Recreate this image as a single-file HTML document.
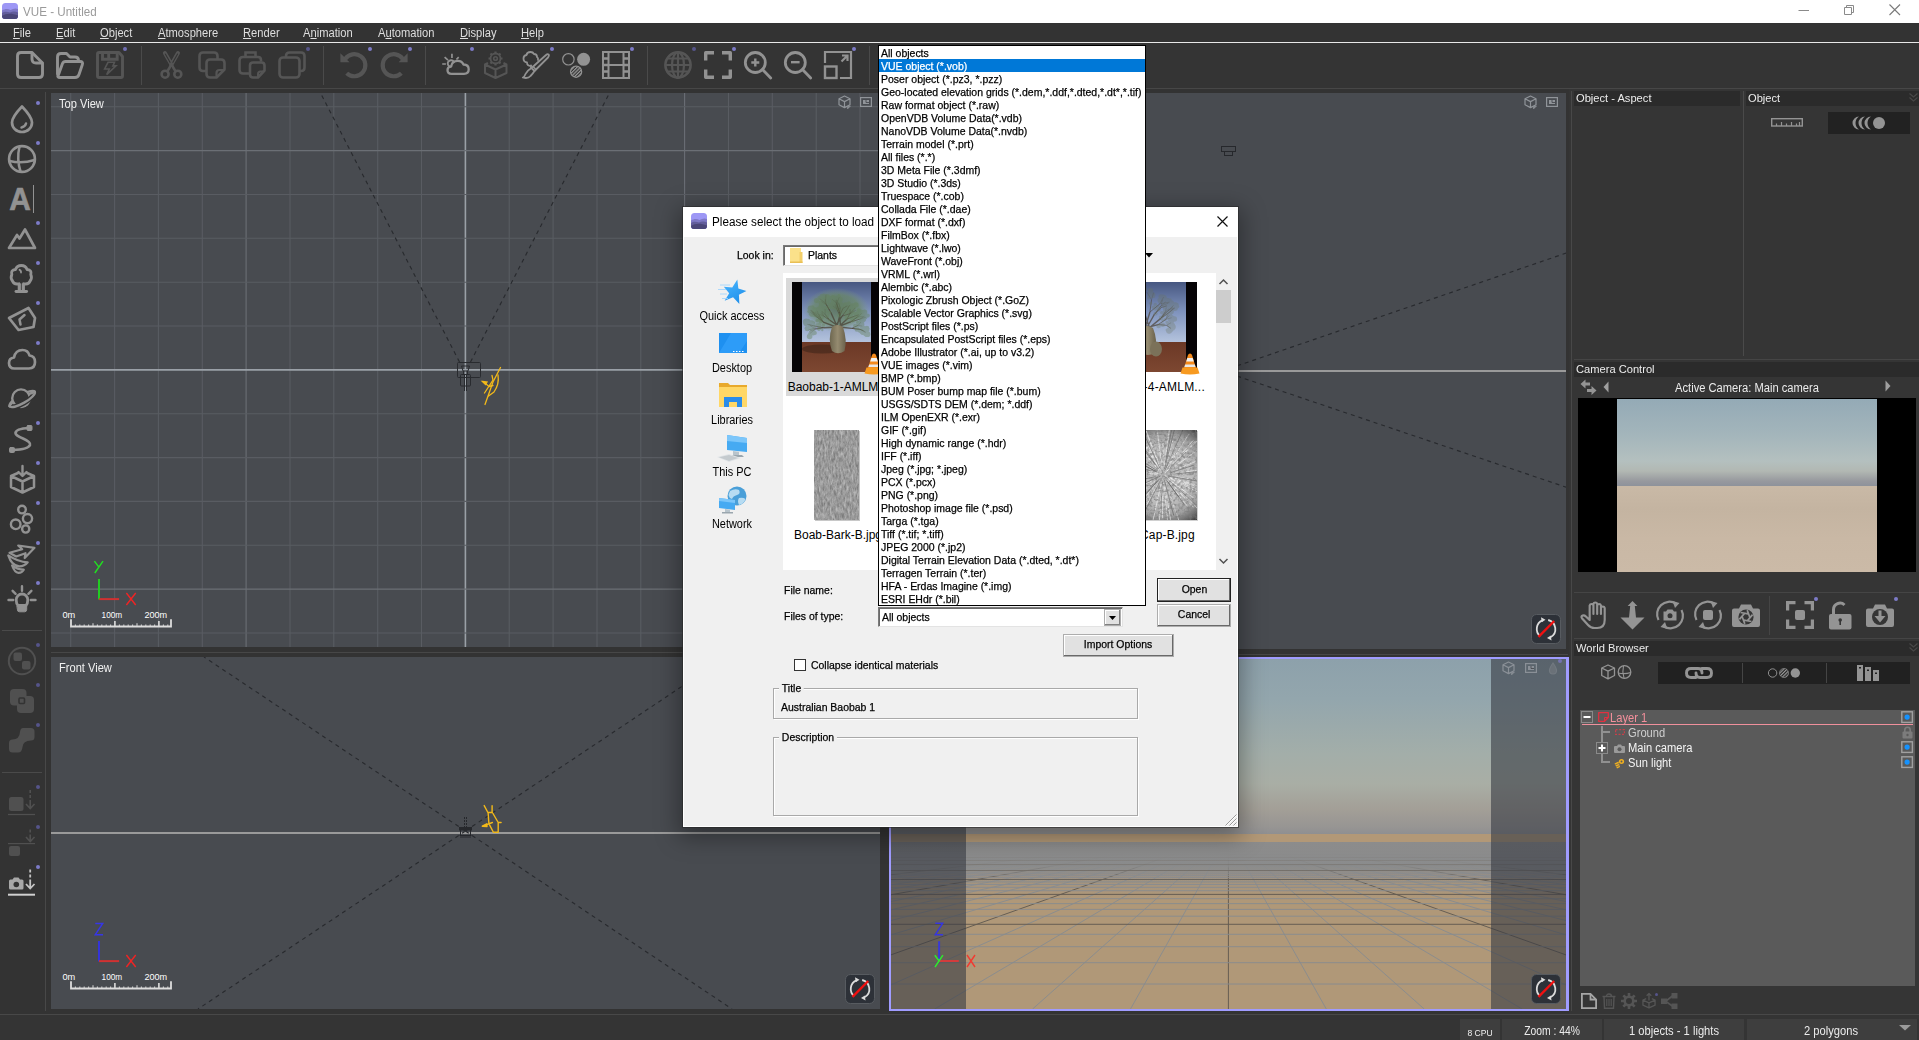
<!DOCTYPE html>
<html lang="en">
<head>
<meta charset="utf-8">
<title>VUE - Untitled</title>
<style>
*{box-sizing:border-box;margin:0;padding:0}
html,body{width:1919px;height:1040px;overflow:hidden;background:#333;font-family:"Liberation Sans",sans-serif;font-size:12px;color:#e4e4e4}
.abs{position:absolute}
#app{position:absolute;left:0;top:0;width:1919px;height:1040px;overflow:hidden;background:#333}
#titlebar{position:absolute;left:0;top:0;width:1919px;height:23px;background:#fff;color:#999}
#titlebar .t{position:absolute;left:23px;top:5px;font-size:12.5px;color:#9a9a9a;white-space:nowrap;transform-origin:0 50%;transform:scaleX(.93)}
#menubar{position:absolute;left:0;top:23px;width:1919px;height:19px;background:#333}
#menubar span{position:absolute;top:3px;font-size:12px;color:#dedede;white-space:nowrap;transform-origin:0 50%;transform:scaleX(.93)}
#menubar u{text-decoration:underline;text-underline-offset:1px}
#menuline{position:absolute;left:0;top:42px;width:1919px;height:1px;background:#e8e8e8}
#toolbar{position:absolute;left:0;top:43px;width:1919px;height:46px;background:#343434}
.tsep{position:absolute;top:3px;width:1px;height:39px;background:#4a4a4a}
.dot{position:absolute;width:4px;height:4px;border-radius:50%;background:#7d7bc8}
.dot.dim{background:#55548a}
svg{position:absolute;overflow:visible}
.vp{position:absolute;background:#484b50;overflow:hidden}
.vplabel{position:absolute;left:8px;top:4px;font-size:12px;color:#f0f0f0;white-space:nowrap;transform-origin:0 50%;transform:scaleX(.925)}
.ph{position:absolute;background:#2b2b2b;color:#ececec;font-size:11.6px;padding:.5px 0 0 2px;white-space:nowrap;height:15px;line-height:12px}
.ph span{display:inline-block;transform-origin:0 50%;transform:scaleX(.96)}
</style>
</head>
<body>
<div id="app">
<div id="titlebar">
  <svg style="left:2px;top:3px" width="16" height="16" viewBox="0 0 16 16">
    <defs><clipPath id="ic1"><rect x="0" y="0" width="16" height="16" rx="3.5"/></clipPath></defs>
    <g clip-path="url(#ic1)">
      <rect width="16" height="16" fill="#9d97f5"/>
      <path d="M0 7.5 C3 5.5 6 5.5 8.5 7 C11 5.5 13.5 5 16 6 V16 H0Z" fill="#7e78c6"/>
      <path d="M0 10 C2.5 8 5.5 8.5 8 9.5 C10.5 8 13.5 8 16 9.5 V16 H0Z" fill="#625d9c"/>
      <path d="M0 13 C4 10 10 10 16 12.5 V16 H0Z" fill="#4a4678"/>
    </g>
  </svg>
  <div class="t">VUE - Untitled</div>
  <svg style="left:1798px;top:5px" width="12" height="12" viewBox="0 0 12 12"><path d="M0.5 5.5H11" stroke="#8a8a8a" stroke-width="1" fill="none"/></svg>
  <svg style="left:1843px;top:4px" width="12" height="12" viewBox="0 0 12 12"><path d="M1.5 3.5H8.5V10.5H1.5Z M3.5 3.5V1.5H10.5V8.5H8.5" stroke="#8a8a8a" stroke-width="1" fill="none"/></svg>
  <svg style="left:1889px;top:4px" width="12" height="12" viewBox="0 0 12 12"><path d="M0.5 0.5L11 11M11 0.5L0.5 11" stroke="#7a7a7a" stroke-width="1.1" fill="none"/></svg>
</div>
<div id="menubar">
  <span style="left:13px"><u>F</u>ile</span>
  <span style="left:56px"><u>E</u>dit</span>
  <span style="left:100px"><u>O</u>bject</span>
  <span style="left:158px"><u>A</u>tmosphere</span>
  <span style="left:243px"><u>R</u>ender</span>
  <span style="left:303px">A<u>n</u>imation</span>
  <span style="left:378px">A<u>u</u>tomation</span>
  <span style="left:460px"><u>D</u>isplay</span>
  <span style="left:521px"><u>H</u>elp</span>
</div>
<div id="menuline"></div>
<div id="toolbar">
  <div class="abs" style="left:0;top:45px;width:1919px;height:1px;background:#474747"></div>
  <div class="tsep" style="left:141px"></div>
  <div class="tsep" style="left:323px"></div>
  <div class="tsep" style="left:425px"></div>
  <div class="tsep" style="left:647px"></div>
  <div class="tsep" style="left:869px"></div>
  <div class="dot" style="left:123px;top:4px;background:#706eb4"></div>
  <div class="dot dim" style="left:306px;top:4px"></div>
  <div class="dot" style="left:368px;top:4px"></div>
  <div class="dot" style="left:408px;top:4px"></div>
  <div class="dot" style="left:470px;top:4px"></div>
  <div class="dot" style="left:550px;top:4px"></div>
  <div class="dot" style="left:630px;top:4px"></div>
  <div class="dot dim" style="left:692px;top:4px"></div>
  <div class="dot" style="left:732px;top:4px"></div>
  <div class="dot" style="left:852px;top:4px"></div>
  <!-- new -->
  <svg style="left:16px;top:8px" width="28" height="28" viewBox="0 0 28 28" fill="none" stroke="#929292" stroke-width="2.9" stroke-linejoin="round" stroke-linecap="round">
    <path d="M5 1.5H16L26.5 12V23Q26.5 26.5 23 26.5H5Q1.5 26.5 1.5 23V5Q1.5 1.5 5 1.5Z"/><path d="M16 2V8Q16 12 20 12H26"/></svg>
  <!-- open -->
  <svg style="left:56px;top:8px" width="28" height="28" viewBox="0 0 28 28" fill="none" stroke="#929292" stroke-width="2.9" stroke-linejoin="round" stroke-linecap="round">
    <path d="M1.5 23V6Q1.5 2.5 5 2.5H10.5L14 6H19Q22.5 6 22.5 9.5V10.5"/><path d="M2 25L6.5 12.5Q7.3 10.5 9.5 10.5H24Q27.5 10.5 26.3 13.8L23 23.5Q22 26.5 19 26.5H4Q1 26.5 2 24Z"/></svg>
  <!-- save (disabled) -->
  <svg style="left:96px;top:8px" width="28" height="28" viewBox="0 0 28 28" fill="none" stroke="#555" stroke-width="2.900" stroke-linejoin="round">
    <path d="M3 1.500H23L26.500 5.500V25Q26.500 26.500 25 26.500H3Q1.500 26.500 1.500 25V3Q1.500 1.500 3 1.500Z"/><path d="M6.500 2V8.200H21.200V2M12.700 2V8" stroke-linejoin="miter"/><path d="M12 11.300H18.500L16.900 14.900H20L10.700 23.700L13.300 18H8.600Z" stroke-width="1.600" stroke-linejoin="miter"/></svg>
  <!-- cut -->
  <svg style="left:158px;top:8px" width="28" height="28" viewBox="0 0 28 28" fill="none" stroke="#555" stroke-linecap="round" stroke-linejoin="round">
    <path d="M6.900 2L13.300 13.300M20 2L13.600 13.300" stroke-width="4"/><path d="M7.300 3L12.300 11.800M19.600 3L14.600 11.800" stroke="#343434" stroke-width="1.100"/>
    <path d="M13.300 12.500Q15.500 17.500 17.600 20.300M13.600 12.500Q11.400 17.500 9.300 20.300" stroke-width="2.600"/>
    <circle cx="7.100" cy="23.200" r="3.500" stroke-width="2.600"/><circle cx="19.800" cy="23.200" r="3.500" stroke-width="2.600"/></svg>
  <!-- copy -->
  <svg style="left:198px;top:8px" width="28" height="28" viewBox="0 0 28 28" fill="none" stroke="#555" stroke-width="2.6" stroke-linejoin="round">
    <path d="M8.5 20H5Q1.5 20 1.5 16.500V5Q1.5 1.5 5 1.5H16Q19.5 1.5 19.5 5V8"/><path d="M12 8.500H23Q26.500 8.500 26.500 12V18.500L18.500 26.500H12Q8.500 26.500 8.500 23V12Q8.500 8.500 12 8.500Z"/><path d="M18.500 26V22Q18.500 19 21.500 19H26" stroke-width="2.2"/></svg>
  <!-- paste -->
  <svg style="left:238px;top:8px" width="28" height="28" viewBox="0 0 28 28" fill="none" stroke="#555" stroke-width="2.6" stroke-linejoin="round">
    <path d="M11.500 22.500H5Q1.5 22.500 1.5 19V9.500Q1.5 6 5 6H20Q23 6 23 9V10.500"/><path d="M7.500 6V1.5H17.500V6" stroke-linejoin="miter"/><path d="M15 11.500H23.500Q26.500 11.500 26.500 14.500V19.500L20 26.500H15Q12 26.500 12 23.500V14.500Q12 11.500 15 11.500Z"/><path d="M20 26V23Q20 20.500 22.500 20.500H26" stroke-width="2"/></svg>
  <!-- duplicate -->
  <svg style="left:278px;top:8px" width="28" height="28" viewBox="0 0 28 28" fill="none" stroke="#555" stroke-width="2.6" stroke-linejoin="round">
    <path d="M8 6.500V5Q8 1.500 11.500 1.500H23Q26.500 1.500 26.500 5V16.500Q26.500 20 23 20H22"/><rect x="1.500" y="6.500" width="20" height="20" rx="3.500"/></svg>
  <!-- undo -->
  <svg style="left:340px;top:8px" width="28" height="28" viewBox="0 0 28 28" fill="none" stroke="#555" stroke-width="4.200">
    <path d="M5.100 8.100A11.050 11.050 0 1 1 6.700 22.200"/><path d="M0.400 2.200V11.300H9.500Z" fill="#555" stroke="none"/></svg>
  <!-- redo -->
  <svg style="left:381px;top:8px" width="28" height="28" viewBox="0 0 28 28" fill="none" stroke="#555" stroke-width="4.200">
    <path d="M21.950 8.100A11.050 11.050 0 1 0 20.350 22.200"/><path d="M26.650 2.200V11.300H17.550Z" fill="#555" stroke="none"/></svg>
  <!-- atmosphere -->
  <svg style="left:442px;top:8px" width="28" height="28" viewBox="0 0 28 28" fill="none" stroke="#929292" stroke-width="2.300" stroke-linecap="round" stroke-linejoin="round">
    <path d="M9.500 22.800Q5.500 22.800 5.500 19Q5.500 15.800 9.200 15.300Q10 9.800 15.800 9.800Q20 9.800 21.500 13.500Q26.700 13.700 26.700 18.300Q26.700 22.800 22 22.800Z"/><path d="M8.500 15.800A3.400 3.400 0 0 1 6 11.200A3.400 3.400 0 0 1 12 10.800" stroke-width="1.900"/><path d="M9.950 2.800V7M2.600 6.100L6 9.100M16.700 6.100L14.400 8.500M0.200 13H3.900" stroke-width="1.700" stroke-linecap="butt"/></svg>
  <!-- gear cube (disabled) -->
  <svg style="left:484px;top:8px" width="24" height="28" viewBox="0 0 24 28" fill="none" stroke="#555" stroke-width="2" stroke-linejoin="round">
    <path d="M4 12L1 13.500V22L11.500 27L22.500 22V13.500L19.500 12M1 13.500L11.500 18.500L22.500 13.500M11.500 18.500V27"/><circle cx="11.500" cy="7.500" r="1.800" stroke-width="1.600"/><circle cx="11.500" cy="7.500" r="5" stroke-width="1.800"/><g stroke-width="2.200"><path d="M11.500 0.500V2.500M11.500 12.500V14.500M4.500 7.500H6.500M16.500 7.500H18.500M6.500 2.500L8 4M15 11L16.500 12.500M6.500 12.500L8 11M15 4L16.500 2.500"/></g></svg>
  <!-- brush -->
  <svg style="left:522px;top:8px" width="28" height="28" viewBox="0 0 28 28" fill="none" stroke="#929292" stroke-width="1.800" stroke-linejoin="round" stroke-linecap="round">
    <path d="M9 15Q5 15 5 11.500Q1.500 11 1.500 7.500Q1.500 4.500 4.500 4Q5 1 8.500 1Q11 1 12 3Q15 3 15 6Q16.500 7 16 9"/><path d="M9 14.500V17"/><path d="M26.500 3.500Q27.500 4.500 26 6.500L12.500 20L9.500 17L24 4Q25.500 2.500 26.500 3.500Z"/><path d="M9.500 17Q5 19.500 3.500 23Q2.500 26 0.800 26.500Q6 28 8.500 25Q11 22.500 12.500 20"/><path d="M11 15.500L14 18.500" stroke-width="1.500"/></svg>
  <!-- spheres -->
  <svg style="left:562px;top:8px" width="28" height="28" viewBox="0 0 28 28">
    <defs><pattern id="hat" width="2.400" height="2.400" patternUnits="userSpaceOnUse" patternTransform="rotate(-45)"><rect width="2.400" height="1.200" fill="#9a9a9a"/></pattern></defs>
    <circle cx="6.400" cy="8.300" r="5.700" fill="none" stroke="#929292" stroke-width="1.200"/><circle cx="21.600" cy="8.300" r="6.500" fill="#929292"/><circle cx="14.100" cy="20.700" r="5.600" fill="url(#hat)" stroke="#929292" stroke-width="1.200"/></svg>
  <!-- film -->
  <svg style="left:602px;top:8px" width="28" height="28" viewBox="0 0 28 28" fill="none" stroke="#929292" stroke-width="2">
    <rect x="1" y="1" width="26" height="26"/><path d="M6.500 1V27M21.500 1V27M6.500 14H21.500"/><path d="M1 7.500H6.500M1 14H6.500M1 20.500H6.500M21.500 7.500H27M21.500 14H27M21.500 20.500H27" stroke-width="2.600"/></svg>
  <!-- globe (disabled) -->
  <svg style="left:664px;top:8px" width="28" height="28" viewBox="0 0 28 28" fill="none" stroke="#555" stroke-width="2.200">
    <circle cx="14" cy="14" r="12.600" stroke-width="2.600"/><ellipse cx="14" cy="14" rx="6" ry="12.600"/><path d="M14 1.500V26.500M1.500 14H26.500M3.500 7.500H24.500M3.500 20.500H24.500"/></svg>
  <!-- frame -->
  <svg style="left:704px;top:8px" width="28" height="28" viewBox="0 0 28 28" fill="none" stroke="#929292" stroke-width="3.400" stroke-linejoin="round">
    <path d="M1.700 9.500V1.700H10M18 1.700H26.300V9.500M26.300 18.500V26.300H18M10 26.300H1.700V18.500"/></svg>
  <!-- zoom in -->
  <svg style="left:744px;top:8px" width="30" height="30" viewBox="0 0 30 30" fill="none" stroke="#929292" stroke-width="2.800" stroke-linecap="round">
    <circle cx="11.300" cy="11.500" r="10"/><path d="M18.500 18.500L26.700 27"/><path d="M7.300 11.500H15.300M11.300 7.500V15.500" stroke-width="2.400" stroke-linecap="butt"/></svg>
  <!-- zoom out -->
  <svg style="left:784px;top:8px" width="30" height="30" viewBox="0 0 30 30" fill="none" stroke="#929292" stroke-width="2.800" stroke-linecap="round">
    <circle cx="11.300" cy="11.500" r="10"/><path d="M18.500 18.500L26.700 27"/><path d="M7 11.200H15.600" stroke-width="2.400" stroke-linecap="butt"/></svg>
  <!-- resize -->
  <svg style="left:824px;top:8px" width="28" height="28" viewBox="0 0 28 28" fill="none" stroke="#929292" stroke-width="2.200">
    <path d="M1 12V1H27V27H16"/><rect x="1" y="15.500" width="11.500" height="11.500" stroke-width="2.400"/><path d="M17.500 10.500L23 5M18 4.500H23.500V10" stroke-width="2.200"/></svg>
</div>
<div id="lefttb" class="abs" style="left:0;top:89px;width:51px;height:926px;background:#333">
  <div class="abs" style="left:45px;top:3px;width:1px;height:919px;background:#484848"></div>
  <div class="abs" style="left:2px;top:541px;width:40px;height:1px;background:#4a4a4a"></div>
  <div class="abs" style="left:2px;top:683px;width:40px;height:1px;background:#4a4a4a"></div>
  <div class="dot" style="left:36px;top:12px"></div>
  <div class="dot" style="left:36px;top:52px"></div>
  <div class="dot" style="left:36px;top:132px"></div>
  <div class="dot" style="left:36px;top:172px"></div>
  <div class="dot" style="left:36px;top:212px"></div>
  <div class="dot" style="left:36px;top:252px"></div>
  <div class="dot" style="left:36px;top:332px"></div>
  <div class="dot" style="left:36px;top:372px"></div>
  <div class="dot" style="left:36px;top:412px"></div>
  <div class="dot" style="left:36px;top:452px"></div>
  <div class="dot" style="left:36px;top:492px"></div>
  <div class="dot dim" style="left:36px;top:554px"></div>
  <div class="dot dim" style="left:36px;top:594px"></div>
  <div class="dot dim" style="left:36px;top:634px"></div>
  <div class="dot dim" style="left:36px;top:696px"></div>
  <div class="dot dim" style="left:36px;top:736px"></div>
  <div class="dot" style="left:36px;top:776px"></div>
  
  <!-- drop  (page y 105-133 => local 16-44) -->
  <svg style="left:8px;top:16px" width="28" height="28" viewBox="0 0 28 28" fill="none" stroke="#929292" stroke-width="2.700" stroke-linecap="round" stroke-linejoin="round">
    <path d="M14 1.500Q24 12 24 17.500A10 9.500 0 0 1 4 17.500Q4 12 14 1.500Z"/><path d="M18 18.500Q17 22 13.500 22.500" stroke-width="2.500"/></svg>
  <!-- sphere -->
  <svg style="left:8px;top:56px" width="28" height="28" viewBox="0 0 28 28" fill="none" stroke="#929292" stroke-width="2.500">
    <circle cx="14" cy="14" r="12.900" stroke-width="2.700"/><path d="M11.500 1.500Q8.500 14 12.500 26.500M1.500 16Q14 19 26.500 15"/></svg>
  <!-- A| -->
  <svg style="left:8px;top:94px" width="28" height="32" viewBox="0 0 28 32">
    <text x="1.300" y="27" font-family="Liberation Sans,sans-serif" font-weight="bold" font-size="31" fill="#929292" stroke="#929292" stroke-width=".7" textLength="21.500" lengthAdjust="spacingAndGlyphs">A</text>
    <path d="M25.500 2V30" stroke="#929292" stroke-width="1"/></svg>
  <!-- mountain -->
  <svg style="left:7px;top:138px" width="30" height="24" viewBox="0 0 30 24" fill="none" stroke="#929292" stroke-width="2.700" stroke-linejoin="round">
    <path d="M2 21L10 8L12.500 11.500L18 2.500L28 21Z"/></svg>
  <!-- tree -->
  <svg style="left:9px;top:175px" width="26" height="30" viewBox="0 0 26 30" fill="none" stroke="#929292" stroke-width="2.900" stroke-linejoin="round" stroke-linecap="round">
    <path d="M10 19.800Q5 21 3.500 17Q1.200 14 2.800 10.500Q1.500 6 6.500 5.500Q8 1.500 12.300 1.500Q16.600 1.500 18.100 5.500Q23.100 6 21.800 10.500Q23.400 14 21.100 17Q19.600 21 14.600 19.800"/><path d="M10.300 19.500V26M14.300 19.500V26" stroke-width="3.200" stroke-linecap="butt"/><path d="M7 27.500H17.600"/><path d="M10.500 5.800Q12.300 6.500 12 8.500" stroke-width="1.800"/></svg>
  <!-- rock -->
  <svg style="left:7px;top:217px" width="30" height="26" viewBox="0 0 30 26" fill="none" stroke="#929292" stroke-width="2.700" stroke-linejoin="round" stroke-linecap="round">
    <path d="M2 12L21.500 2L28 12L26.500 21L11.500 24Z"/><path d="M17.500 9L12.500 13.500L13.500 18.500" stroke-width="2.500"/></svg>
  <!-- cloud -->
  <svg style="left:7px;top:259px" width="30" height="22" viewBox="0 0 30 22" fill="none" stroke="#929292" stroke-width="2.700" stroke-linejoin="round">
    <path d="M7.500 20.500Q2 20.500 2 15Q2 10 7 9.500Q8.500 2 15.500 2Q21 2 22.500 7.500Q28 8 28 14Q28 20.500 22 20.500Z"/></svg>
  <!-- planet -->
  <svg style="left:7px;top:298px" width="30" height="24" viewBox="0 0 30 24" fill="none" stroke="#929292" stroke-width="2.400" stroke-linecap="round">
    <defs><clipPath id="plc"><circle cx="14" cy="11.200" r="9.500"/></clipPath></defs>
    <ellipse cx="15.200" cy="12" rx="14.500" ry="4.200" transform="rotate(-30 15.200 12)"/>
    <circle cx="14" cy="11.200" r="9" fill="#333" stroke="none"/>
    <circle cx="14" cy="11.200" r="8.800"/>
    <g clip-path="url(#plc)"><path d="M2.600 19.250A14.500 4.200 -30 0 0 27.750 4.750L29 30H2Z" fill="#929292" stroke="none"/></g>
    <path d="M2.600 19.250A14.500 4.200 -30 0 0 27.750 4.750" stroke="#333" stroke-width="5.200" stroke-linecap="butt"/>
    <path d="M2.600 19.250A14.500 4.200 -30 0 0 27.750 4.750"/>
    <path d="M2.600 19.250A14.500 4.200 -30 0 1 6 14.800M27.750 4.750A14.500 4.200 -30 0 0 22.300 7"/>
  </svg>
  <!-- spline -->
  <svg style="left:8px;top:335px" width="28" height="30" viewBox="0 0 28 30" fill="none" stroke="#929292" stroke-width="2.700" stroke-linecap="round">
    <path d="M21 4Q8 4.500 7.500 9Q7.500 11.500 15 14.500Q23 18 22 21Q20 25.500 5 26"/><rect x="19" y="1.500" width="5" height="5" rx="1" fill="#929292" stroke-width="1"/><rect x="1.500" y="23.500" width="5" height="5" rx="1" fill="#929292" stroke-width="1"/></svg>
  <!-- box import -->
  <svg style="left:9px;top:376px" width="28" height="30" viewBox="0 0 28 30" fill="none" stroke="#929292" stroke-width="2.500" stroke-linejoin="round" stroke-linecap="round">
    <path d="M9 8L2 11V22L13.500 27.500L25 22V11L18 8M2 11L13.500 16.500L25 11M13.500 16.500V27.500"/><path d="M13.500 1V10.500M9.500 7L13.500 11L17.500 7" stroke-width="2.400"/></svg>
  <!-- circles -->
  <svg style="left:8px;top:414px" width="28" height="30" viewBox="0 0 28 30" fill="none" stroke="#929292" stroke-width="2.400">
    <circle cx="14" cy="6.600" r="3.800"/><circle cx="19.500" cy="15.600" r="4.600"/><circle cx="7.700" cy="21.300" r="4.800"/><circle cx="17.700" cy="26" r="3.600"/></svg>
  <!-- swoosh arrow -->
  <svg style="left:7px;top:455px" width="30" height="31" viewBox="0 0 30 31" fill="none" stroke="#929292" stroke-width="2.200" stroke-linejoin="round" stroke-linecap="round">
    <path d="M11.200 1.500L27.500 3.800L17.700 14L18.500 9.200L9.200 12.500L2.500 8.700L15.200 5.300Z"/><path d="M1.300 11.300Q4.500 21.500 12.300 22.400Q17.500 22.300 20.700 18.300Q11 17.800 1.300 11.300Z"/><path d="M5.100 21.500Q7.500 28.500 11.500 28.900Q15 28.800 16.800 25.700Q10.500 25.500 5.100 21.500Z"/></svg>
  <!-- bulb -->
  <svg style="left:7px;top:495px" width="30" height="30" viewBox="0 0 30 30" fill="none" stroke="#929292" stroke-width="2.400" stroke-linecap="round">
    <path d="M11 21.500Q9.200 19.500 9.200 15.800A5.800 5.800 0 0 1 20.800 15.800Q20.800 19.500 19 21.500Z" stroke-width="2.800" stroke-linejoin="round"/><path d="M10.300 22H19.700V25.500Q19.700 27.800 17.500 27.800H12.500Q10.300 27.800 10.300 25.500Z" fill="#929292" stroke-width="1"/><path d="M15 2.200V6.800M5.600 6.800L8.600 9.800M24.400 6.800L21.400 9.800M1.500 16H6.200M23.800 16H28.500"/></svg>
  <!-- disabled 1: circle with two squares -->
  <svg style="left:7px;top:557px" width="30" height="30" viewBox="0 0 30 30">
    <circle cx="15" cy="15" r="13.200" fill="none" stroke="#505050" stroke-width="2"/><rect x="6.500" y="6.500" width="8.500" height="8.500" rx="2" fill="#505050"/><rect x="15" y="15" width="8.500" height="8.500" rx="2" fill="#505050"/></svg>
  <!-- disabled 2 -->
  <svg style="left:9px;top:599px" width="26" height="26" viewBox="0 0 26 26">
    <rect x="1" y="1" width="16.500" height="16.500" rx="4" fill="#505050"/><rect x="8" y="8" width="17" height="17" rx="4" fill="#505050"/><rect x="10" y="10" width="5.500" height="5.500" rx="1" fill="none" stroke="#333" stroke-width="1.600"/></svg>
  <!-- disabled 3 -->
  <svg style="left:8px;top:638px" width="28" height="28" viewBox="0 0 28 28">
    <path d="M15 1H23Q26.500 1 26.500 4.500V10Q26.500 13.500 23 13.500Q15 13.500 14.500 20Q14 25.500 10 25.500H4.500Q1 25.500 1 22V16Q1 12.500 4.500 12.500Q11.500 12.500 12 5Q12.500 1 15 1Z" fill="#505050"/></svg>
  <!-- drop 1 -->
  <svg style="left:7px;top:699px" width="30" height="30" viewBox="0 0 30 30" fill="none" stroke="#505050" stroke-width="1.400">
    <rect x="2" y="9" width="14.500" height="14" rx="2.500" fill="#505050" stroke="none"/><path d="M23.200 2V5M23.200 7V10M23.200 12V20M19 16L23.200 20.500L27.500 16" stroke-width="1.600"/><path d="M1 26.500H28" stroke-width="1.200"/></svg>
  <!-- drop 2 -->
  <svg style="left:7px;top:739px" width="30" height="30" viewBox="0 0 30 30" fill="none" stroke="#505050" stroke-width="1.400">
    <rect x="2" y="18" width="11" height="10" rx="2" fill="#505050" stroke="none"/><path d="M23.200 1.500V4.500M23.200 6.500V13M19 9L23.200 13.500L27.500 9" stroke-width="1.600"/><path d="M1 15.600H28" stroke-width="1.200"/></svg>
  <!-- drop 3 camera -->
  <svg style="left:7px;top:779px" width="30" height="30" viewBox="0 0 30 30" fill="none" stroke="#c4c4c4" stroke-width="1.400">
    <path d="M2 13Q2 11.500 3.500 11.500H5.500L7 9.500H11.500L13 11.500H15Q16.500 11.500 16.500 13V20Q16.500 21.500 15 21.500H3.500Q2 21.500 2 20Z" fill="#a8a8a8" stroke="none"/><circle cx="9.300" cy="16.500" r="2.800" fill="#333" stroke="none"/><path d="M23.200 1.500V4.500M23.200 6.500V9.500M23.200 11.500V20M19 16L23.200 20.500L27.500 16" stroke-width="1.800"/><path d="M1 26.700H28" stroke-width="2" stroke="#d0d0d0"/></svg>
</div>
<div class="vp" id="vptop" style="left:51px;top:93px;width:829px;height:554px">
<svg style="left:0;top:0" width="829" height="554" viewBox="51 93 829 554" shape-rendering="auto">
<path d="M70.7 93V647" stroke="#595c62" stroke-width="1.1"/>
<path d="M114.6 93V647" stroke="#595c62" stroke-width="1.1"/>
<path d="M158.4 93V647" stroke="#595c62" stroke-width="1.1"/>
<path d="M202.3 93V647" stroke="#595c62" stroke-width="1.1"/>
<path d="M246.1 93V647" stroke="#6b6f75" stroke-width="1.1"/>
<path d="M290.0 93V647" stroke="#595c62" stroke-width="1.1"/>
<path d="M333.8 93V647" stroke="#595c62" stroke-width="1.1"/>
<path d="M377.7 93V647" stroke="#595c62" stroke-width="1.1"/>
<path d="M421.5 93V647" stroke="#595c62" stroke-width="1.1"/>
<path d="M465.4 93V647" stroke="#9aa0a7" stroke-width="1.6"/>
<path d="M509.2 93V647" stroke="#595c62" stroke-width="1.1"/>
<path d="M553.1 93V647" stroke="#595c62" stroke-width="1.1"/>
<path d="M597.0 93V647" stroke="#595c62" stroke-width="1.1"/>
<path d="M640.8 93V647" stroke="#595c62" stroke-width="1.1"/>
<path d="M684.6 93V647" stroke="#6b6f75" stroke-width="1.1"/>
<path d="M728.5 93V647" stroke="#595c62" stroke-width="1.1"/>
<path d="M772.3 93V647" stroke="#595c62" stroke-width="1.1"/>
<path d="M816.2 93V647" stroke="#595c62" stroke-width="1.1"/>
<path d="M860.0 93V647" stroke="#595c62" stroke-width="1.1"/>
<path d="M51 106.8H880" stroke="#595c62" stroke-width="1.1"/>
<path d="M51 150.6H880" stroke="#6b6f75" stroke-width="1.1"/>
<path d="M51 194.5H880" stroke="#595c62" stroke-width="1.1"/>
<path d="M51 238.3H880" stroke="#595c62" stroke-width="1.1"/>
<path d="M51 282.2H880" stroke="#595c62" stroke-width="1.1"/>
<path d="M51 326.0H880" stroke="#595c62" stroke-width="1.1"/>
<path d="M51 369.9H880" stroke="#9aa0a7" stroke-width="1.6"/>
<path d="M51 413.8H880" stroke="#595c62" stroke-width="1.1"/>
<path d="M51 457.6H880" stroke="#595c62" stroke-width="1.1"/>
<path d="M51 501.4H880" stroke="#595c62" stroke-width="1.1"/>
<path d="M51 545.3H880" stroke="#595c62" stroke-width="1.1"/>
<path d="M51 589.1H880" stroke="#6b6f75" stroke-width="1.1"/>
<path d="M51 633.0H880" stroke="#595c62" stroke-width="1.1"/>
<path d="M459.500 362L320.500 93M470.500 362L609.500 93" stroke="#282a2e" stroke-width="1.150" stroke-dasharray="4 4" fill="none"/>
<g fill="none" stroke="#292b2f" stroke-width="1"><rect x="457.500" y="362.500" width="23" height="15" rx="1"/><rect x="460.500" y="374.500" width="10" height="11.500" rx="1"/><path d="M461.500 366H469.500L468 371H463ZM463.500 371V375M467.500 371V375M464.500 375V391M466.500 375V391"/></g>
<g fill="none" stroke="#f2b91a" stroke-width="1.300" stroke-linecap="round"><path d="M500.500 367.500L493 382L485 404.500"/><path d="M498 375Q499.500 384 494 392L488.500 396"/><path d="M492 375.500L493 380L484.500 393M489 386.500L493 385.500M489 386.500L485.500 383.500"/><path d="M482.500 381.500L487 382L485.500 384.500Z" fill="#f2b91a"/></g>
</svg>
<div class="vplabel">Top View</div>
<svg style="left:787px;top:2px" width="14" height="15" viewBox="0 0 14 15" fill="none" stroke="#909499" stroke-width="1.200" stroke-linejoin="round"><path d="M6.500 1L12 3.800V9.800L6.500 12.600L1 9.800V3.800ZM1 3.800L6.500 6.600L12 3.800M6.500 6.600V12.600"/><path d="M9.500 11.500V14L12.500 11Z" fill="#909499" stroke-width="0.600"/></svg>
<svg style="left:809px;top:4px" width="12" height="10" viewBox="0 0 12 10" fill="none" stroke="#909499" stroke-width="1.200"><rect x="0.600" y="0.600" width="10.800" height="8.800"/><rect x="3" y="3" width="6" height="4" fill="#909499" stroke="none"/><path d="M6 3V5.500H9" stroke="#484b50" stroke-width="0.900"/></svg>
<svg style="left:0;top:0" width="200" height="587" viewBox="51 93 200 587" fill="none"><path d="M99 579V599.500" stroke="#22cc22" stroke-width="2"/><path d="M99 599.100H119.100" stroke="#d03232" stroke-width="2"/><path d="M94.400 561.100L98.700 566.900M103 561.100L94.800 573" stroke="#22dd22" stroke-width="1.500"/><path d="M126.400 593L135.700 605M135.700 593L126.400 605" stroke="#f02424" stroke-width="1.400"/></svg>
<svg style="left:0;top:0" width="200" height="587" viewBox="51 93 200 587" fill="none"><g font-family="Liberation Sans,sans-serif" font-size="9.2" fill="#fff"><text x="62.500" y="618" textLength="12.800" lengthAdjust="spacingAndGlyphs">0m</text><text x="101.600" y="618" textLength="20.600" lengthAdjust="spacingAndGlyphs">100m</text><text x="144.400" y="618" textLength="22.800" lengthAdjust="spacingAndGlyphs">200m</text></g><path d="M71 619.300V626.500H171V619.300" stroke="#dcdcdc" stroke-width="1.800"/><path d="M114.900 621V626M158.900 621V626" stroke="#dcdcdc" stroke-width="1.600"/><path d="M75.4 624.6V626M79.8 624.6V626M84.2 624.6V626M88.6 624.6V626M93.0 623.3V626M97.4 624.6V626M101.8 624.6V626M106.2 624.6V626M110.6 624.6V626M119.4 624.6V626M123.8 624.6V626M128.2 624.6V626M132.6 624.6V626M137.0 623.3V626M141.4 624.6V626M145.8 624.6V626M150.2 624.6V626M154.6 624.6V626M163.4 624.6V626M167.8 624.6V626" stroke="#d0d0d0" stroke-width="1.100"/></svg>
</div>
<div class="vp" id="vpside" style="left:889px;top:93px;width:677px;height:556px">
<svg style="left:0;top:0" width="677" height="556" viewBox="889 93 677 556">
<path d="M889 371H1566" stroke="#9a9a9a" stroke-width="2"/>
<path d="M1222 371L1567 252.800M1222 371L1567 487.500" stroke="#282a2e" stroke-width="1.150" stroke-dasharray="4 4" fill="none"/>
<g fill="none" stroke="#26282c" stroke-width="1"><rect x="1221.500" y="146.500" width="14" height="5"/><rect x="1224.500" y="151.500" width="8" height="4"/></g>
</svg>
<div class="vplabel">Side View</div>
<svg style="left:635px;top:2px" width="14" height="15" viewBox="0 0 14 15" fill="none" stroke="#909499" stroke-width="1.200" stroke-linejoin="round"><path d="M6.500 1L12 3.800V9.800L6.500 12.600L1 9.800V3.800ZM1 3.800L6.500 6.600L12 3.800M6.500 6.600V12.600"/><path d="M9.500 11.500V14L12.500 11Z" fill="#909499" stroke-width="0.600"/></svg>
<svg style="left:657px;top:4px" width="12" height="10" viewBox="0 0 12 10" fill="none" stroke="#909499" stroke-width="1.200"><rect x="0.600" y="0.600" width="10.800" height="8.800"/><rect x="3" y="3" width="6" height="4" fill="#909499" stroke="none"/><path d="M6 3V5.500H9" stroke="#484b50" stroke-width="0.900"/></svg>
<svg style="left:642px;top:521px" width="30" height="30" viewBox="0 0 30 30" fill="none"><rect x="0.500" y="0.500" width="29" height="29" rx="5" fill="#2d3138" stroke="#575b60" stroke-width="1"/><path d="M9.200 22.200A9.300 9.300 0 0 1 11.500 6.400" stroke="#dcdcdc" stroke-width="1.800"/><path d="M17.200 6A9.300 9.300 0 0 1 19.500 23.200" stroke="#dcdcdc" stroke-width="1.800"/><path d="M10 3.300L14.500 5.800L10.800 8.300Z" fill="#dcdcdc"/><path d="M20.500 26.500L16 24L19.800 21.600Z" fill="#dcdcdc"/><path d="M7.500 22.800L23.200 7" stroke="#f01010" stroke-width="2.400"/></svg>
</div>
<div class="vp" id="vpfront" style="left:51px;top:657px;width:829px;height:352px">
<svg style="left:0;top:0" width="829" height="352" viewBox="51 657 829 352">
<path d="M51 833H880" stroke="#9a9a9a" stroke-width="2"/>
<path d="M465.400 831L204 657M465.400 831L732 1009M465.400 831L198 1009M465.400 831L726 657" stroke="#282a2e" stroke-width="1.150" stroke-dasharray="4 4" fill="none"/>
<g fill="none" stroke="#26282c" stroke-width="1"><path d="M464.500 817V827M466.500 817V827" stroke-dasharray="2 1"/><rect x="459.500" y="827.500" width="12" height="2.500" fill="#26282c"/><path d="M460.500 830V836M470.500 830V836M459.500 835.500H471.500M460 837H471"/></g>
<g fill="none" stroke="#f2b91a" stroke-width="1.400" stroke-linecap="round" stroke-linejoin="round"><path d="M484.200 805.600L487.900 812.500H492.400L498.200 822.500V832.200H493.400L488.900 823.600L488.100 812.500M492.100 805.800V812.500M498.200 822.500H501.100M492.400 822.500L485.500 825.200"/><path d="M482.300 826.200L486.800 823.800L487 826.600Z" fill="#f2b91a"/></g>
</svg>
<div class="vplabel">Front View</div>
<svg style="left:0;top:0" width="200" height="587" viewBox="51 295 200 587" fill="none"><path d="M99 579V599.500" stroke="#3434d8" stroke-width="2"/><path d="M99 599.100H119.100" stroke="#d03232" stroke-width="2"/><path d="M95.300 561.500H102.700L95.300 572.700H103" stroke="#3636e6" stroke-width="1.500"/><path d="M126.400 593L135.700 605M135.700 593L126.400 605" stroke="#f02424" stroke-width="1.400"/></svg>
<svg style="left:0;top:0" width="200" height="587" viewBox="51 295 200 587" fill="none"><g font-family="Liberation Sans,sans-serif" font-size="9.2" fill="#fff"><text x="62.500" y="618" textLength="12.800" lengthAdjust="spacingAndGlyphs">0m</text><text x="101.600" y="618" textLength="20.600" lengthAdjust="spacingAndGlyphs">100m</text><text x="144.400" y="618" textLength="22.800" lengthAdjust="spacingAndGlyphs">200m</text></g><path d="M71 619.300V626.500H171V619.300" stroke="#dcdcdc" stroke-width="1.800"/><path d="M114.900 621V626M158.900 621V626" stroke="#dcdcdc" stroke-width="1.600"/><path d="M75.4 624.6V626M79.8 624.6V626M84.2 624.6V626M88.6 624.6V626M93.0 623.3V626M97.4 624.6V626M101.8 624.6V626M106.2 624.6V626M110.6 624.6V626M119.4 624.6V626M123.8 624.6V626M128.2 624.6V626M132.6 624.6V626M137.0 623.3V626M141.4 624.6V626M145.8 624.6V626M150.2 624.6V626M154.6 624.6V626M163.4 624.6V626M167.8 624.6V626" stroke="#d0d0d0" stroke-width="1.100"/></svg>
<svg style="left:794px;top:317px" width="30" height="30" viewBox="0 0 30 30" fill="none"><rect x="0.500" y="0.500" width="29" height="29" rx="5" fill="#2d3138" stroke="#575b60" stroke-width="1"/><path d="M9.200 22.200A9.300 9.300 0 0 1 11.500 6.400" stroke="#dcdcdc" stroke-width="1.800"/><path d="M17.200 6A9.300 9.300 0 0 1 19.500 23.200" stroke="#dcdcdc" stroke-width="1.800"/><path d="M10 3.300L14.500 5.800L10.800 8.300Z" fill="#dcdcdc"/><path d="M20.500 26.500L16 24L19.800 21.600Z" fill="#dcdcdc"/><path d="M7.500 22.800L23.200 7" stroke="#f01010" stroke-width="2.400"/></svg>
</div>
<div class="abs" id="vppersp" style="left:889px;top:657px;width:680px;height:354px;background:#a09cff;overflow:hidden">
<div class="abs" style="left:2px;top:2px;width:675px;height:350px;overflow:hidden;background:linear-gradient(to bottom,#8da1ab 0px,#93a6ad 40px,#a3aea9 95px,#a9aea5 125px,#a39f97 150px,#979593 168px,#8f8f91 175px,#b29877 175.500px,#b29877 183px,#8c8c8c 183.500px,#8c8c8c 190px,#b09878 240px,#b09878 350px)">
<svg style="left:0;top:0" width="675" height="350" viewBox="891 659 675 350">
<defs><linearGradient id="haze" x1="0" y1="0" x2="0" y2="1"><stop offset="0" stop-color="#8c8c8c" stop-opacity="1"/><stop offset="0.250" stop-color="#8c8c8c" stop-opacity="0.950"/><stop offset="1" stop-color="#8c8c8c" stop-opacity="0"/></linearGradient></defs>
<g fill="none"><path d="M1228.4 834.7L-4645.6 1009.0" stroke="#625b51" stroke-width="0.95"/>
<path d="M1228.4 834.7L-4547.7 1009.0" stroke="#878b90" stroke-width="0.9"/>
<path d="M1228.4 834.7L-4449.8 1009.0" stroke="#878b90" stroke-width="0.9"/>
<path d="M1228.4 834.7L-4351.9 1009.0" stroke="#878b90" stroke-width="0.9"/>
<path d="M1228.4 834.7L-4254.0 1009.0" stroke="#878b90" stroke-width="0.9"/>
<path d="M1228.4 834.7L-4156.1 1009.0" stroke="#625b51" stroke-width="0.95"/>
<path d="M1228.4 834.7L-4058.2 1009.0" stroke="#878b90" stroke-width="0.9"/>
<path d="M1228.4 834.7L-3960.3 1009.0" stroke="#878b90" stroke-width="0.9"/>
<path d="M1228.4 834.7L-3862.4 1009.0" stroke="#878b90" stroke-width="0.9"/>
<path d="M1228.4 834.7L-3764.5 1009.0" stroke="#878b90" stroke-width="0.9"/>
<path d="M1228.4 834.7L-3666.6 1009.0" stroke="#625b51" stroke-width="0.95"/>
<path d="M1228.4 834.7L-3568.7 1009.0" stroke="#878b90" stroke-width="0.9"/>
<path d="M1228.4 834.7L-3470.8 1009.0" stroke="#878b90" stroke-width="0.9"/>
<path d="M1228.4 834.7L-3372.9 1009.0" stroke="#878b90" stroke-width="0.9"/>
<path d="M1228.4 834.7L-3275.0 1009.0" stroke="#878b90" stroke-width="0.9"/>
<path d="M1228.4 834.7L-3177.1 1009.0" stroke="#625b51" stroke-width="0.95"/>
<path d="M1228.4 834.7L-3079.2 1009.0" stroke="#878b90" stroke-width="0.9"/>
<path d="M1228.4 834.7L-2981.3 1009.0" stroke="#878b90" stroke-width="0.9"/>
<path d="M1228.4 834.7L-2883.4 1009.0" stroke="#878b90" stroke-width="0.9"/>
<path d="M1228.4 834.7L-2785.5 1009.0" stroke="#878b90" stroke-width="0.9"/>
<path d="M1228.4 834.7L-2687.6 1009.0" stroke="#625b51" stroke-width="0.95"/>
<path d="M1228.4 834.7L-2589.7 1009.0" stroke="#878b90" stroke-width="0.9"/>
<path d="M1228.4 834.7L-2491.8 1009.0" stroke="#878b90" stroke-width="0.9"/>
<path d="M1228.4 834.7L-2393.9 1009.0" stroke="#878b90" stroke-width="0.9"/>
<path d="M1228.4 834.7L-2296.0 1009.0" stroke="#878b90" stroke-width="0.9"/>
<path d="M1228.4 834.7L-2198.1 1009.0" stroke="#625b51" stroke-width="0.95"/>
<path d="M1228.4 834.7L-2100.2 1009.0" stroke="#878b90" stroke-width="0.9"/>
<path d="M1228.4 834.7L-2002.3 1009.0" stroke="#878b90" stroke-width="0.9"/>
<path d="M1228.4 834.7L-1904.4 1009.0" stroke="#878b90" stroke-width="0.9"/>
<path d="M1228.4 834.7L-1806.5 1009.0" stroke="#878b90" stroke-width="0.9"/>
<path d="M1228.4 834.7L-1708.6 1009.0" stroke="#625b51" stroke-width="0.95"/>
<path d="M1228.4 834.7L-1610.7 1009.0" stroke="#878b90" stroke-width="0.9"/>
<path d="M1228.4 834.7L-1512.8 1009.0" stroke="#878b90" stroke-width="0.9"/>
<path d="M1228.4 834.7L-1414.9 1009.0" stroke="#878b90" stroke-width="0.9"/>
<path d="M1228.4 834.7L-1317.0 1009.0" stroke="#878b90" stroke-width="0.9"/>
<path d="M1228.4 834.7L-1219.1 1009.0" stroke="#625b51" stroke-width="0.95"/>
<path d="M1228.4 834.7L-1121.2 1009.0" stroke="#878b90" stroke-width="0.9"/>
<path d="M1228.4 834.7L-1023.3 1009.0" stroke="#878b90" stroke-width="0.9"/>
<path d="M1228.4 834.7L-925.4 1009.0" stroke="#878b90" stroke-width="0.9"/>
<path d="M1228.4 834.7L-827.5 1009.0" stroke="#878b90" stroke-width="0.9"/>
<path d="M1228.4 834.7L-729.6 1009.0" stroke="#625b51" stroke-width="0.95"/>
<path d="M1228.4 834.7L-631.7 1009.0" stroke="#878b90" stroke-width="0.9"/>
<path d="M1228.4 834.7L-533.8 1009.0" stroke="#878b90" stroke-width="0.9"/>
<path d="M1228.4 834.7L-435.9 1009.0" stroke="#878b90" stroke-width="0.9"/>
<path d="M1228.4 834.7L-338.0 1009.0" stroke="#878b90" stroke-width="0.9"/>
<path d="M1228.4 834.7L-240.1 1009.0" stroke="#625b51" stroke-width="0.95"/>
<path d="M1228.4 834.7L-142.2 1009.0" stroke="#878b90" stroke-width="0.9"/>
<path d="M1228.4 834.7L-44.3 1009.0" stroke="#878b90" stroke-width="0.9"/>
<path d="M1228.4 834.7L53.6 1009.0" stroke="#878b90" stroke-width="0.9"/>
<path d="M1228.4 834.7L151.5 1009.0" stroke="#878b90" stroke-width="0.9"/>
<path d="M1228.4 834.7L249.4 1009.0" stroke="#625b51" stroke-width="0.95"/>
<path d="M1228.4 834.7L347.3 1009.0" stroke="#878b90" stroke-width="0.9"/>
<path d="M1228.4 834.7L445.2 1009.0" stroke="#878b90" stroke-width="0.9"/>
<path d="M1228.4 834.7L543.1 1009.0" stroke="#878b90" stroke-width="0.9"/>
<path d="M1228.4 834.7L641.0 1009.0" stroke="#878b90" stroke-width="0.9"/>
<path d="M1228.4 834.7L738.9 1009.0" stroke="#625b51" stroke-width="0.95"/>
<path d="M1228.4 834.7L836.8 1009.0" stroke="#878b90" stroke-width="0.9"/>
<path d="M1228.4 834.7L934.7 1009.0" stroke="#878b90" stroke-width="0.9"/>
<path d="M1228.4 834.7L1032.6 1009.0" stroke="#878b90" stroke-width="0.9"/>
<path d="M1228.4 834.7L1130.5 1009.0" stroke="#878b90" stroke-width="0.9"/>
<path d="M1228.4 834.7L1228.4 1009.0" stroke="#625b51" stroke-width="0.95"/>
<path d="M1228.4 834.7L1326.3 1009.0" stroke="#878b90" stroke-width="0.9"/>
<path d="M1228.4 834.7L1424.2 1009.0" stroke="#878b90" stroke-width="0.9"/>
<path d="M1228.4 834.7L1522.1 1009.0" stroke="#878b90" stroke-width="0.9"/>
<path d="M1228.4 834.7L1620.0 1009.0" stroke="#878b90" stroke-width="0.9"/>
<path d="M1228.4 834.7L1717.9 1009.0" stroke="#625b51" stroke-width="0.95"/>
<path d="M1228.4 834.7L1815.8 1009.0" stroke="#878b90" stroke-width="0.9"/>
<path d="M1228.4 834.7L1913.7 1009.0" stroke="#878b90" stroke-width="0.9"/>
<path d="M1228.4 834.7L2011.6 1009.0" stroke="#878b90" stroke-width="0.9"/>
<path d="M1228.4 834.7L2109.5 1009.0" stroke="#878b90" stroke-width="0.9"/>
<path d="M1228.4 834.7L2207.4 1009.0" stroke="#625b51" stroke-width="0.95"/>
<path d="M1228.4 834.7L2305.3 1009.0" stroke="#878b90" stroke-width="0.9"/>
<path d="M1228.4 834.7L2403.2 1009.0" stroke="#878b90" stroke-width="0.9"/>
<path d="M1228.4 834.7L2501.1 1009.0" stroke="#878b90" stroke-width="0.9"/>
<path d="M1228.4 834.7L2599.0 1009.0" stroke="#878b90" stroke-width="0.9"/>
<path d="M1228.4 834.7L2696.9 1009.0" stroke="#625b51" stroke-width="0.95"/>
<path d="M1228.4 834.7L2794.8 1009.0" stroke="#878b90" stroke-width="0.9"/>
<path d="M1228.4 834.7L2892.7 1009.0" stroke="#878b90" stroke-width="0.9"/>
<path d="M1228.4 834.7L2990.6 1009.0" stroke="#878b90" stroke-width="0.9"/>
<path d="M1228.4 834.7L3088.5 1009.0" stroke="#878b90" stroke-width="0.9"/>
<path d="M1228.4 834.7L3186.4 1009.0" stroke="#625b51" stroke-width="0.95"/>
<path d="M1228.4 834.7L3284.3 1009.0" stroke="#878b90" stroke-width="0.9"/>
<path d="M1228.4 834.7L3382.2 1009.0" stroke="#878b90" stroke-width="0.9"/>
<path d="M1228.4 834.7L3480.1 1009.0" stroke="#878b90" stroke-width="0.9"/>
<path d="M1228.4 834.7L3578.0 1009.0" stroke="#878b90" stroke-width="0.9"/>
<path d="M1228.4 834.7L3675.9 1009.0" stroke="#625b51" stroke-width="0.95"/>
<path d="M1228.4 834.7L3773.8 1009.0" stroke="#878b90" stroke-width="0.9"/>
<path d="M1228.4 834.7L3871.7 1009.0" stroke="#878b90" stroke-width="0.9"/>
<path d="M1228.4 834.7L3969.6 1009.0" stroke="#878b90" stroke-width="0.9"/>
<path d="M1228.4 834.7L4067.5 1009.0" stroke="#878b90" stroke-width="0.9"/>
<path d="M1228.4 834.7L4165.4 1009.0" stroke="#625b51" stroke-width="0.95"/>
<path d="M1228.4 834.7L4263.3 1009.0" stroke="#878b90" stroke-width="0.9"/>
<path d="M1228.4 834.7L4361.2 1009.0" stroke="#878b90" stroke-width="0.9"/>
<path d="M1228.4 834.7L4459.1 1009.0" stroke="#878b90" stroke-width="0.9"/>
<path d="M1228.4 834.7L4557.0 1009.0" stroke="#878b90" stroke-width="0.9"/>
<path d="M1228.4 834.7L4654.9 1009.0" stroke="#625b51" stroke-width="0.95"/>
<path d="M1228.4 834.7L4752.8 1009.0" stroke="#878b90" stroke-width="0.9"/>
<path d="M1228.4 834.7L4850.7 1009.0" stroke="#878b90" stroke-width="0.9"/>
<path d="M1228.4 834.7L4948.6 1009.0" stroke="#878b90" stroke-width="0.9"/>
<path d="M1228.4 834.7L5046.5 1009.0" stroke="#878b90" stroke-width="0.9"/>
<path d="M1228.4 834.7L5144.4 1009.0" stroke="#625b51" stroke-width="0.95"/>
<path d="M1228.4 834.7L5242.3 1009.0" stroke="#878b90" stroke-width="0.9"/>
<path d="M1228.4 834.7L5340.2 1009.0" stroke="#878b90" stroke-width="0.9"/>
<path d="M1228.4 834.7L5438.1 1009.0" stroke="#878b90" stroke-width="0.9"/>
<path d="M1228.4 834.7L5536.0 1009.0" stroke="#878b90" stroke-width="0.9"/>
<path d="M1228.4 834.7L5633.9 1009.0" stroke="#625b51" stroke-width="0.95"/>
<path d="M1228.4 834.7L5731.8 1009.0" stroke="#878b90" stroke-width="0.9"/>
<path d="M1228.4 834.7L5829.7 1009.0" stroke="#878b90" stroke-width="0.9"/>
<path d="M1228.4 834.7L5927.6 1009.0" stroke="#878b90" stroke-width="0.9"/>
<path d="M1228.4 834.7L6025.5 1009.0" stroke="#878b90" stroke-width="0.9"/>
<path d="M1228.4 834.7L6123.4 1009.0" stroke="#625b51" stroke-width="0.95"/>
<path d="M1228.4 834.7L6221.3 1009.0" stroke="#878b90" stroke-width="0.9"/>
<path d="M1228.4 834.7L6319.2 1009.0" stroke="#878b90" stroke-width="0.9"/>
<path d="M1228.4 834.7L6417.1 1009.0" stroke="#878b90" stroke-width="0.9"/>
<path d="M1228.4 834.7L6515.0 1009.0" stroke="#878b90" stroke-width="0.9"/>
<path d="M1228.4 834.7L6612.9 1009.0" stroke="#625b51" stroke-width="0.95"/>
<path d="M1228.4 834.7L6710.8 1009.0" stroke="#878b90" stroke-width="0.9"/>
<path d="M1228.4 834.7L6808.7 1009.0" stroke="#878b90" stroke-width="0.9"/>
<path d="M1228.4 834.7L6906.6 1009.0" stroke="#878b90" stroke-width="0.9"/>
<path d="M1228.4 834.7L7004.5 1009.0" stroke="#878b90" stroke-width="0.9"/>
<path d="M1228.4 834.7L7102.4 1009.0" stroke="#625b51" stroke-width="0.95"/>
<path d="M891 984.0H1566" stroke="#878b90" stroke-width="0.9" opacity="1.00"/>
<path d="M891 962.7H1566" stroke="#878b90" stroke-width="0.9" opacity="1.00"/>
<path d="M891 946.7H1566" stroke="#878b90" stroke-width="0.9" opacity="1.00"/>
<path d="M891 934.3H1566" stroke="#878b90" stroke-width="0.9" opacity="1.00"/>
<path d="M891 924.3H1566" stroke="#625b51" stroke-width="0.95" opacity="1.00"/>
<path d="M891 916.2H1566" stroke="#878b90" stroke-width="0.9" opacity="1.00"/>
<path d="M891 909.4H1566" stroke="#878b90" stroke-width="0.9" opacity="1.00"/>
<path d="M891 903.6H1566" stroke="#878b90" stroke-width="0.9" opacity="1.00"/>
<path d="M891 898.7H1566" stroke="#878b90" stroke-width="0.9" opacity="1.00"/>
<path d="M891 894.4H1566" stroke="#625b51" stroke-width="0.95" opacity="1.00"/>
<path d="M891 890.7H1566" stroke="#878b90" stroke-width="0.9" opacity="1.00"/>
<path d="M891 887.4H1566" stroke="#878b90" stroke-width="0.9" opacity="1.00"/>
<path d="M891 884.5H1566" stroke="#878b90" stroke-width="0.9" opacity="1.00"/>
<path d="M891 881.9H1566" stroke="#878b90" stroke-width="0.9" opacity="1.00"/>
<path d="M891 879.5H1566" stroke="#625b51" stroke-width="0.95" opacity="1.00"/>
<path d="M891 877.4H1566" stroke="#878b90" stroke-width="0.9" opacity="1.00"/>
<path d="M891 875.4H1566" stroke="#878b90" stroke-width="0.9" opacity="1.00"/>
<path d="M891 873.7H1566" stroke="#878b90" stroke-width="0.9" opacity="1.00"/>
<path d="M891 872.0H1566" stroke="#878b90" stroke-width="0.9" opacity="1.00"/>
<path d="M891 870.5H1566" stroke="#625b51" stroke-width="0.95" opacity="1.00"/>
<path d="M891 869.2H1566" stroke="#878b90" stroke-width="0.9" opacity="1.00"/>
<path d="M891 867.9H1566" stroke="#878b90" stroke-width="0.9" opacity="1.00"/>
<path d="M891 866.7H1566" stroke="#878b90" stroke-width="0.9" opacity="1.00"/>
<path d="M891 865.6H1566" stroke="#878b90" stroke-width="0.9" opacity="1.00"/>
<path d="M891 864.6H1566" stroke="#625b51" stroke-width="0.95" opacity="1.00"/>
<path d="M891 863.6H1566" stroke="#878b90" stroke-width="0.9" opacity="1.00"/>
<path d="M891 862.7H1566" stroke="#878b90" stroke-width="0.9" opacity="1.00"/>
<path d="M891 861.9H1566" stroke="#878b90" stroke-width="0.9" opacity="1.00"/>
<path d="M891 861.1H1566" stroke="#878b90" stroke-width="0.9" opacity="1.00"/>
<path d="M891 860.3H1566" stroke="#625b51" stroke-width="0.95" opacity="1.00"/>
<path d="M891 859.6H1566" stroke="#878b90" stroke-width="0.9" opacity="1.00"/>
<path d="M891 858.9H1566" stroke="#878b90" stroke-width="0.9" opacity="1.00"/>
<path d="M891 858.3H1566" stroke="#878b90" stroke-width="0.9" opacity="1.00"/>
<path d="M891 857.7H1566" stroke="#878b90" stroke-width="0.9" opacity="1.00"/>
<path d="M891 857.1H1566" stroke="#625b51" stroke-width="0.95" opacity="1.00"/>
<path d="M891 856.6H1566" stroke="#878b90" stroke-width="0.9" opacity="0.98"/>
<path d="M891 856.0H1566" stroke="#878b90" stroke-width="0.9" opacity="0.95"/>
<path d="M891 855.5H1566" stroke="#878b90" stroke-width="0.9" opacity="0.93"/>
<path d="M891 855.1H1566" stroke="#878b90" stroke-width="0.9" opacity="0.91"/>
<path d="M891 854.6H1566" stroke="#625b51" stroke-width="0.95" opacity="0.89"/>
<path d="M891 854.2H1566" stroke="#878b90" stroke-width="0.9" opacity="0.87"/>
<path d="M891 853.8H1566" stroke="#878b90" stroke-width="0.9" opacity="0.85"/>
<path d="M891 853.4H1566" stroke="#878b90" stroke-width="0.9" opacity="0.83"/>
<path d="M891 853.0H1566" stroke="#878b90" stroke-width="0.9" opacity="0.82"/>
<path d="M891 852.6H1566" stroke="#625b51" stroke-width="0.95" opacity="0.80"/>
<path d="M891 852.3H1566" stroke="#878b90" stroke-width="0.9" opacity="0.78"/>
<path d="M891 851.9H1566" stroke="#878b90" stroke-width="0.9" opacity="0.77"/>
<path d="M891 851.6H1566" stroke="#878b90" stroke-width="0.9" opacity="0.75"/>
<path d="M891 851.3H1566" stroke="#878b90" stroke-width="0.9" opacity="0.74"/>
<path d="M891 851.0H1566" stroke="#625b51" stroke-width="0.95" opacity="0.73"/>
<path d="M891 850.7H1566" stroke="#878b90" stroke-width="0.9" opacity="0.71"/>
<path d="M891 850.4H1566" stroke="#878b90" stroke-width="0.9" opacity="0.70"/>
<path d="M891 850.1H1566" stroke="#878b90" stroke-width="0.9" opacity="0.69"/>
<path d="M891 849.9H1566" stroke="#878b90" stroke-width="0.9" opacity="0.68"/>
<path d="M891 849.6H1566" stroke="#625b51" stroke-width="0.95" opacity="0.67"/>
<path d="M891 849.4H1566" stroke="#878b90" stroke-width="0.9" opacity="0.66"/>
<path d="M891 849.2H1566" stroke="#878b90" stroke-width="0.9" opacity="0.65"/>
<path d="M891 848.9H1566" stroke="#878b90" stroke-width="0.9" opacity="0.63"/>
<path d="M891 848.7H1566" stroke="#878b90" stroke-width="0.9" opacity="0.62"/>
<path d="M891 848.5H1566" stroke="#625b51" stroke-width="0.95" opacity="0.62"/>
<path d="M891 848.3H1566" stroke="#878b90" stroke-width="0.9" opacity="0.61"/>
<path d="M891 848.1H1566" stroke="#878b90" stroke-width="0.9" opacity="0.60"/>
<path d="M891 847.9H1566" stroke="#878b90" stroke-width="0.9" opacity="0.59"/>
<path d="M891 847.7H1566" stroke="#878b90" stroke-width="0.9" opacity="0.58"/>
<path d="M891 847.5H1566" stroke="#625b51" stroke-width="0.95" opacity="0.57"/>
<path d="M891 847.3H1566" stroke="#878b90" stroke-width="0.9" opacity="0.56"/>
<path d="M891 847.1H1566" stroke="#878b90" stroke-width="0.9" opacity="0.56"/>
<path d="M891 847.0H1566" stroke="#878b90" stroke-width="0.9" opacity="0.55"/>
<path d="M891 846.8H1566" stroke="#878b90" stroke-width="0.9" opacity="0.54"/>
<path d="M891 846.6H1566" stroke="#625b51" stroke-width="0.95" opacity="0.53"/>
<path d="M891 846.5H1566" stroke="#878b90" stroke-width="0.9" opacity="0.53"/>
<path d="M891 846.3H1566" stroke="#878b90" stroke-width="0.9" opacity="0.52"/>
<path d="M891 846.2H1566" stroke="#878b90" stroke-width="0.9" opacity="0.51"/>
<path d="M891 846.0H1566" stroke="#878b90" stroke-width="0.9" opacity="0.51"/>
<path d="M891 845.9H1566" stroke="#625b51" stroke-width="0.95" opacity="0.50"/>
<path d="M891 845.8H1566" stroke="#878b90" stroke-width="0.9" opacity="0.49"/>
<path d="M891 845.6H1566" stroke="#878b90" stroke-width="0.9" opacity="0.49"/>
<path d="M891 845.5H1566" stroke="#878b90" stroke-width="0.9" opacity="0.48"/>
<path d="M891 845.4H1566" stroke="#878b90" stroke-width="0.9" opacity="0.48"/>
<path d="M891 845.2H1566" stroke="#625b51" stroke-width="0.95" opacity="0.47"/>
<path d="M891 845.1H1566" stroke="#878b90" stroke-width="0.9" opacity="0.47"/>
<path d="M891 845.0H1566" stroke="#878b90" stroke-width="0.9" opacity="0.46"/>
<path d="M891 844.9H1566" stroke="#878b90" stroke-width="0.9" opacity="0.45"/>
<path d="M891 844.8H1566" stroke="#878b90" stroke-width="0.9" opacity="0.45"/>
<path d="M891 844.7H1566" stroke="#625b51" stroke-width="0.95" opacity="0.44"/>
<path d="M891 844.5H1566" stroke="#878b90" stroke-width="0.9" opacity="0.44"/>
<path d="M891 844.4H1566" stroke="#878b90" stroke-width="0.9" opacity="0.43"/>
<path d="M891 844.3H1566" stroke="#878b90" stroke-width="0.9" opacity="0.43"/>
<path d="M891 844.2H1566" stroke="#878b90" stroke-width="0.9" opacity="0.43"/>
<path d="M891 844.1H1566" stroke="#625b51" stroke-width="0.95" opacity="0.42"/>
<path d="M891 844.0H1566" stroke="#878b90" stroke-width="0.9" opacity="0.42"/>
<path d="M891 843.9H1566" stroke="#878b90" stroke-width="0.9" opacity="0.41"/>
<path d="M891 843.8H1566" stroke="#878b90" stroke-width="0.9" opacity="0.41"/>
<path d="M891 843.8H1566" stroke="#878b90" stroke-width="0.9" opacity="0.40"/>
<path d="M891 843.7H1566" stroke="#625b51" stroke-width="0.95" opacity="0.40"/>
<path d="M891 843.6H1566" stroke="#878b90" stroke-width="0.9" opacity="0.40"/>
<path d="M891 843.5H1566" stroke="#878b90" stroke-width="0.9" opacity="0.39"/>
<path d="M891 843.4H1566" stroke="#878b90" stroke-width="0.9" opacity="0.39"/>
<path d="M891 843.3H1566" stroke="#878b90" stroke-width="0.9" opacity="0.38"/>
<path d="M891 843.2H1566" stroke="#625b51" stroke-width="0.95" opacity="0.38"/>
<path d="M891 843.2H1566" stroke="#878b90" stroke-width="0.9" opacity="0.38"/>
<path d="M891 843.1H1566" stroke="#878b90" stroke-width="0.9" opacity="0.37"/>
<path d="M891 843.0H1566" stroke="#878b90" stroke-width="0.9" opacity="0.37"/>
<path d="M891 842.9H1566" stroke="#878b90" stroke-width="0.9" opacity="0.37"/>
<path d="M891 842.8H1566" stroke="#625b51" stroke-width="0.95" opacity="0.36"/>
<path d="M891 842.8H1566" stroke="#878b90" stroke-width="0.9" opacity="0.36"/>
<path d="M891 842.7H1566" stroke="#878b90" stroke-width="0.9" opacity="0.36"/>
<path d="M891 842.6H1566" stroke="#878b90" stroke-width="0.9" opacity="0.35"/>
<path d="M891 842.6H1566" stroke="#878b90" stroke-width="0.9" opacity="0.35"/>
<path d="M891 842.5H1566" stroke="#625b51" stroke-width="0.95" opacity="0.35"/>
<path d="M891 842.4H1566" stroke="#878b90" stroke-width="0.9" opacity="0.34"/>
<path d="M891 842.4H1566" stroke="#878b90" stroke-width="0.9" opacity="0.34"/>
<path d="M891 842.3H1566" stroke="#878b90" stroke-width="0.9" opacity="0.34"/>
<path d="M891 842.2H1566" stroke="#878b90" stroke-width="0.9" opacity="0.34"/></g>
<rect x="891" y="842" width="675" height="42" fill="url(#haze)"/>
<rect x="891" y="834" width="675" height="8" fill="#b29877"/>
</svg>
<div class="abs" style="left:0;top:0;width:75px;height:350px;background:rgba(55,58,66,0.600)"></div>
<div class="abs" style="left:600px;top:0;width:75px;height:350px;background:rgba(55,58,66,0.600)"></div>
<svg style="left:611px;top:2px" width="14" height="15" viewBox="0 0 14 15" fill="none" stroke="#8a9097" stroke-width="1.200" stroke-linejoin="round"><path d="M6.500 1L12 3.800V9.800L6.500 12.600L1 9.800V3.800ZM1 3.800L6.500 6.600L12 3.800M6.500 6.600V12.600"/><path d="M9.500 11.500V14L12.500 11Z" fill="#8a9097" stroke-width="0.600"/></svg>
<svg style="left:634px;top:4px" width="12" height="10" viewBox="0 0 12 10" fill="none" stroke="#8a9097" stroke-width="1.200"><rect x="0.600" y="0.600" width="10.800" height="8.800"/><rect x="3" y="3" width="6" height="4" fill="#8a9097" stroke="none"/><path d="M6 3V5.500H9" stroke="#484b50" stroke-width="0.900"/></svg>
<svg style="left:657px;top:3px" width="10" height="14" viewBox="0 0 10 14" fill="#6a7178" stroke="#727980" stroke-width="1.200"><path d="M5 1Q8.500 6 8.500 8.500A3.500 3.500 0 0 1 1.500 8.500Q1.500 6 5 1Z"/></svg>
<div class="dot dim" style="left:667px;top:0px;background:#7473b0"></div>
<svg style="left:0;top:0" width="120" height="350" viewBox="891 659 120 350" fill="none"><path d="M939.100 941.200V961" stroke="#3a3ad6" stroke-width="2"/><path d="M939 961H958.800" stroke="#d23c3c" stroke-width="2"/><path d="M934.800 955.200L939.200 961M942.900 955.200L935 967" stroke="#2eea2e" stroke-width="1.500"/><path d="M935.300 923.200H942.700L935.300 934.700H943" stroke="#3636e0" stroke-width="1.500"/><path d="M967 955L975 967M975 955L967 967" stroke="#f23a30" stroke-width="1.400"/></svg>
<svg style="left:640px;top:315px" width="30" height="30" viewBox="0 0 30 30" fill="none"><rect x="0.500" y="0.500" width="29" height="29" rx="5" fill="#2d3138" stroke="#575b60" stroke-width="1"/><path d="M9.200 22.200A9.300 9.300 0 0 1 11.500 6.400" stroke="#dcdcdc" stroke-width="1.800"/><path d="M17.200 6A9.300 9.300 0 0 1 19.500 23.200" stroke="#dcdcdc" stroke-width="1.800"/><path d="M10 3.300L14.500 5.800L10.800 8.300Z" fill="#dcdcdc"/><path d="M20.500 26.500L16 24L19.800 21.600Z" fill="#dcdcdc"/><path d="M7.500 22.800L23.200 7" stroke="#f01010" stroke-width="2.400"/></svg>
</div></div>
<div class="abs" style="left:51px;top:652px;width:829px;height:1px;background:#474747"></div>
<div class="abs" style="left:889px;top:654px;width:679px;height:1px;background:#474747"></div>
<div id="rightpanel" class="abs" style="left:1569px;top:89px;width:350px;height:926px;background:#353535">
  <!-- coordinates local: page x-1569, page y-89 -->
  <div class="abs" style="left:2px;top:2px;width:1px;height:920px;background:#484848"></div>
  <div class="ph" style="left:5px;top:2px;width:166px"><span>Object - Aspect</span></div>
  <div class="abs" style="left:174px;top:2px;width:1px;height:265px;background:#4a4a4a"></div>
  <div class="ph" style="left:177px;top:2px;width:173px"><span>Object</span></div>
  <svg style="left:340px;top:4px" width="9" height="10" viewBox="0 0 9 10" fill="none" stroke="#484848" stroke-width="1.200"><path d="M0.500 0.500L4.500 4L8.500 0.500M0.500 4.500L4.500 8L8.500 4.500"/></svg>
  <!-- ruler -->
  <svg style="left:202px;top:29px" width="32" height="9" viewBox="0 0 32 9" fill="none" stroke="#949494"><rect x="0.700" y="0.700" width="30.600" height="7.300" stroke-width="1.400"/><path d="M5.500 5.500V8M10.500 4V8M15.500 5.500V8M20.500 4V8M25.500 5.500V8M28.500 4V8" stroke-width="1.200"/></svg>
  <div class="abs" style="left:259px;top:23px;width:82px;height:22px;background:#222"></div>
  <svg style="left:283px;top:27px" width="34" height="14" viewBox="0 0 34 14" fill="none" stroke="#949494" stroke-width="1.500"><g fill="#949494" stroke="none"><path d="M7 0.500A6.500 6.500 0 0 0 7 13.500A7.800 7.800 0 0 1 7 0.500Z"/><path d="M13 0.500A6.500 6.500 0 0 0 13 13.500A7.800 7.800 0 0 1 13 0.500Z"/><path d="M19 0.500A6.500 6.500 0 0 0 19 13.500A7.800 7.800 0 0 1 19 0.500Z"/></g><circle cx="27" cy="7" r="6" fill="#949494" stroke="none"/></svg>
  <div class="abs" style="left:5px;top:270px;width:345px;height:1px;background:#454545"></div>
  <div class="ph" style="left:5px;top:273px;width:345px"><span>Camera Control</span></div>
  <!-- active camera row -->
  <svg style="left:11px;top:290px" width="17" height="17" viewBox="0 0 17 17" fill="#949494"><path d="M0.500 5L5.500 0.500V3.500H10V6.500H5.500V9.500Z"/><path d="M16.500 11.500L11.500 7V10H7V13H11.500V16Z"/></svg>
  <svg style="left:34px;top:292px" width="6" height="12" viewBox="0 0 6 12" fill="#a0a0a0"><path d="M5.500 0.500V11.500L0.500 6Z"/></svg>
  <svg style="left:316px;top:291px" width="6" height="12" viewBox="0 0 6 12" fill="#a0a0a0"><path d="M0.500 0.500V11.500L5.500 6Z"/></svg>
  <div class="abs" style="left:47px;top:292px;width:262px;text-align:center;font-size:12px;color:#ececec;white-space:nowrap;transform:scaleX(.93)">Active Camera: Main camera</div>
  <!-- preview -->
  <div class="abs" style="left:9px;top:309px;width:338px;height:174px;background:#000"></div>
  <div class="abs" style="left:48px;top:310px;width:260px;height:173px;background:linear-gradient(to bottom,#94aab6 0px,#a3b5bb 35px,#b4c0bf 62px,#b2b8b3 72px,#97999e 82px,#8e929b 87px,#c9b9a6 87.500px,#c4b4a1 110px,#c9b8a5 140px,#cbbaa7 173px)"></div>
  <div class="abs" style="left:5px;top:503px;width:345px;height:1px;background:#454545"></div>
  <div class="abs" style="left:200px;top:507px;width:1px;height:39px;background:#454545"></div>
  <div class="abs" style="left:5px;top:549px;width:345px;height:1px;background:#454545"></div>
  <div class="dot" style="left:245px;top:508px"></div>
  <div class="dot" style="left:325px;top:508px"></div>
  <!-- hand -->
  <svg style="left:11px;top:512px" width="29" height="29" viewBox="0 0 27 29" preserveAspectRatio="none" fill="none" stroke="#949494" stroke-width="2" stroke-linecap="round" stroke-linejoin="round">
    <path d="M9 14V4.500A1.800 1.800 0 0 1 12.500 4.500V13M12.500 4V2.800A1.800 1.800 0 0 1 16 2.800V13M16 4.500A1.800 1.800 0 0 1 19.500 4.500V13M19.500 7A1.800 1.800 0 0 1 23 7V19Q23 27 16 27H13.500Q10 27 7.500 24L2 17.500Q0.500 15.500 2.500 14.500Q4 14 5.500 15.500L9 19V12"/></svg>
  <!-- down arrow -->
  <svg style="left:51px;top:512px" width="25" height="29" viewBox="0 0 25 29" fill="#949494"><path d="M12.500 0L17.400 5H14.800L16 16.500H24.500L12.500 28.500L0.500 16.500H9L10.200 5H7.600Z"/></svg>
  <!-- rotate camera -->
  <svg style="left:86px;top:511px" width="30" height="30" viewBox="0 0 30 30" fill="none" stroke="#949494" stroke-width="2.200">
    <path d="M3.500 20A12.500 12.500 0 0 1 21 3.500"/><path d="M26.500 10A12.500 12.500 0 0 1 9 26.500"/><path d="M17.500 1L24.500 3L20 8Z" fill="#949494" stroke="none"/><path d="M12.500 29L5.500 27L10 22Z" fill="#949494" stroke="none"/>
    <path d="M8.500 11.500H11L12.500 9.500H17.500L19 11.500H21.500V20.500H8.500Z" fill="#949494" stroke="none"/><circle cx="15" cy="15.800" r="2.500" fill="#353535" stroke="none"/></svg>
  <!-- rotate -->
  <svg style="left:124px;top:511px" width="30" height="30" viewBox="0 0 30 30" fill="none" stroke="#949494" stroke-width="2.200">
    <path d="M3.500 20A12.500 12.500 0 0 1 21 3.500"/><path d="M26.500 10A12.500 12.500 0 0 1 9 26.500"/><path d="M17.500 1L24.500 3L20 8Z" fill="#949494" stroke="none"/><path d="M12.500 29L5.500 27L10 22Z" fill="#949494" stroke="none"/>
    <rect x="10" y="10" width="10" height="10" rx="2" fill="#949494" stroke="none"/></svg>
  <!-- camera aperture -->
  <svg style="left:163px;top:515px" width="28" height="23" viewBox="0 0 28 23"><path d="M2 4.500H7L9 0.500H19L21 4.500H26Q28 4.500 28 6.500V21Q28 23 26 23H2Q0 23 0 21V6.500Q0 4.500 2 4.500Z" fill="#949494"/><circle cx="14" cy="13" r="7.600" fill="#353535"/><path d="M20.6 10.6L15.7 16.4M19.4 17.5L12.0 16.2M12.8 19.9L10.2 12.8M7.4 15.4L12.3 9.6M8.6 8.5L16.0 9.8M15.2 6.1L17.8 13.2" stroke="#949494" stroke-width="1.700" fill="none"/></svg>
  <!-- frame -->
  <svg style="left:217px;top:512px" width="28" height="28" viewBox="0 0 28 28" fill="none" stroke="#949494" stroke-width="3.200"><path d="M1.600 9.500V1.600H9.500M18.500 1.600H26.400V9.500M26.400 18.500V26.400H18.500M9.500 26.400H1.600V18.500"/><rect x="9" y="9" width="10" height="10" rx="2" fill="#949494" stroke="none"/></svg>
  <!-- lock -->
  <svg style="left:260px;top:512px" width="23" height="29" viewBox="0 0 23 29"><path d="M4.500 14V8.500A6.500 6.500 0 0 1 15.500 4" fill="none" stroke="#949494" stroke-width="3"/><rect x="0" y="13" width="22.500" height="15.500" rx="2" fill="#949494"/><circle cx="11.200" cy="19" r="1.800" fill="#353535"/><rect x="10.400" y="19" width="1.600" height="5" fill="#353535"/></svg>
  <!-- download camera -->
  <svg style="left:297px;top:515px" width="28" height="23" viewBox="0 0 28 23"><path d="M2 4.500H7L9 0.500H19L21 4.500H26Q28 4.500 28 6.500V21Q28 23 26 23H2Q0 23 0 21V6.500Q0 4.500 2 4.500Z" fill="#949494"/><circle cx="14" cy="13" r="8" fill="#353535"/><path d="M12.500 6.500H15.500V12H19.500L14 18.500L8.500 12H12.500Z" fill="#949494"/></svg>
  <!-- world browser -->
  <div class="ph" style="left:5px;top:552px;width:345px"><span>World Browser</span></div>
  <svg style="left:340px;top:554px" width="9" height="10" viewBox="0 0 9 10" fill="none" stroke="#484848" stroke-width="1.200"><path d="M0.500 0.500L4.500 4L8.500 0.500M0.500 4.500L4.500 8L8.500 4.500"/></svg>
  <div class="abs" style="left:89px;top:573px;width:252px;height:22px;background:#212121"></div>
  <div class="abs" style="left:173px;top:574px;width:1px;height:20px;background:#454545"></div>
  <div class="abs" style="left:257px;top:574px;width:1px;height:20px;background:#454545"></div>
  <svg style="left:32px;top:575px" width="32" height="16" viewBox="0 0 32 16" fill="none" stroke="#949494" stroke-width="1.300" stroke-linejoin="round"><path d="M7 1L13.500 4V11.500L7 14.800L0.700 11.500V4ZM0.700 4L7 7.200L13.500 4M7 7.200V14.800"/><circle cx="23.500" cy="8" r="6.300"/><path d="M22.500 1.800Q21 8 23 14.200M17.200 9Q23.500 10.500 29.800 8.500" stroke-width="1.100"/></svg>
  <!-- link -->
  <svg style="left:116px;top:578px" width="28" height="12" viewBox="0 0 28 12" fill="none" stroke="#949494" stroke-width="2.900" stroke-linecap="round"><path d="M11 10.500H6Q1.500 10.500 1.500 6T6 1.500H13Q17 1.500 17 6"/><path d="M17 1.500H22Q26.500 1.500 26.500 6T22 10.500H15Q11 10.500 11 6"/></svg>
  <svg style="left:198px;top:579px" width="34" height="10" viewBox="0 0 34 10"><circle cx="5.600" cy="5" r="4.200" fill="none" stroke="#9a9a9a" stroke-width="0.900"/><circle cx="17" cy="5" r="4.600" fill="url(#hat)" stroke="#949494" stroke-width="0.600"/><circle cx="28.300" cy="5" r="4.700" fill="#949494"/></svg>
  <svg style="left:288px;top:576px" width="22" height="16" viewBox="0 0 22 16" fill="#949494"><rect x="0" y="0" width="6" height="16"/><rect x="8" y="2" width="6" height="14"/><rect x="16" y="5" width="6" height="11"/><g fill="#212121"><rect x="2" y="2" width="2" height="1.500"/><rect x="10" y="4.500" width="2" height="1.500"/><rect x="18" y="7.500" width="2" height="1.500"/></g></svg>
  <!-- tree -->
  <div class="abs" style="left:11px;top:621px;width:335px;height:276px;background:#5a5a5a"></div>
  <div class="abs" style="left:13px;top:635px;width:331px;height:1px;background:#f0909c"></div>
  <div class="abs" style="left:32px;top:637px;width:2px;height:37px;background:#909090"></div>
  <div class="abs" style="left:33px;top:642px;width:8px;height:2px;background:#909090"></div>
  <div class="abs" style="left:33px;top:672px;width:8px;height:2px;background:#909090"></div>
  <svg style="left:12px;top:622px" width="13" height="13" viewBox="0 0 13 13"><rect x="0.500" y="0.500" width="11" height="11" fill="none" stroke="#8a8a8a"/><rect x="2.500" y="5" width="7" height="2" fill="#fff"/></svg>
  <svg style="left:27px;top:653px" width="13" height="13" viewBox="0 0 13 13"><rect x="0.500" y="0.500" width="11" height="11" fill="#5a5a5a" stroke="#8a8a8a"/><rect x="2.500" y="5" width="7" height="2" fill="#fff"/><rect x="5" y="2.500" width="2" height="7" fill="#fff"/></svg>
  <svg style="left:29px;top:623px" width="11" height="10" viewBox="0 0 11 10" fill="none" stroke="#e03040" stroke-width="1.300" stroke-linejoin="round"><path d="M0.700 0.700H10.300V5.500L6.500 9.300H0.700Z"/><path d="M6.500 9V5.500H10" stroke-width="1"/></svg>
  <div class="abs" style="left:41px;top:622px;font-size:12px;color:#f4909c;white-space:nowrap;transform-origin:0 50%;transform:scaleX(.93)">Layer 1</div>
  <svg style="left:46px;top:640px" width="10" height="6" viewBox="0 0 10 6" fill="none" stroke="#c8404a" stroke-width="1.200" stroke-dasharray="2 1.500"><rect x="0.600" y="0.600" width="8.800" height="4.800"/></svg>
  <div class="abs" style="left:59px;top:637px;font-size:12px;color:#cfcfcf;white-space:nowrap;transform-origin:0 50%;transform:scaleX(.93)">Ground</div>
  <svg style="left:45px;top:655px" width="11" height="9" viewBox="0 0 11 9"><path d="M1 2H3L4 0.500H7L8 2H10Q11 2 11 3V8Q11 9 10 9H1Q0 9 0 8V3Q0 2 1 2Z" fill="#9a9a9a"/><circle cx="5.500" cy="5.300" r="2" fill="#5a5a5a"/></svg>
  <div class="abs" style="left:59px;top:652px;font-size:12px;color:#f4f4f4;white-space:nowrap;transform-origin:0 50%;transform:scaleX(.93)">Main camera</div>
  <svg style="left:45px;top:669px" width="11" height="11" viewBox="0 0 11 11" fill="#f0b020"><circle cx="7.500" cy="3.500" r="2.600"/><circle cx="7.500" cy="3.500" r="1" fill="#5a5a5a"/><path d="M0.500 5.500L4.500 3.500L6 9L3 10.500Z"/><path d="M1 7L5 5.500M2 9L5.500 7.500" stroke="#5a5a5a" stroke-width="0.700"/></svg>
  <div class="abs" style="left:59px;top:667px;font-size:12px;color:#f4f4f4;white-space:nowrap;transform-origin:0 50%;transform:scaleX(.93)">Sun light</div>
  <svg style="left:332px;top:622px" width="13" height="13" viewBox="0 0 13 13"><rect x="0.800" y="0.800" width="10.600" height="10.600" fill="none" stroke="#a0a0a0" stroke-width="1.400"/><circle cx="6.100" cy="6.100" r="2.600" fill="#1492ff"/></svg>
  <svg style="left:332px;top:652px" width="13" height="13" viewBox="0 0 13 13"><rect x="0.800" y="0.800" width="10.600" height="10.600" fill="none" stroke="#a0a0a0" stroke-width="1.400"/><circle cx="6.100" cy="6.100" r="2.600" fill="#1492ff"/></svg>
  <svg style="left:332px;top:667px" width="13" height="13" viewBox="0 0 13 13"><rect x="0.800" y="0.800" width="10.600" height="10.600" fill="none" stroke="#a0a0a0" stroke-width="1.400"/><circle cx="6.100" cy="6.100" r="2.600" fill="#1492ff"/></svg>
  <svg style="left:333px;top:637px" width="11" height="13" viewBox="0 0 11 13"><path d="M2.800 6V4A2.700 2.700 0 0 1 8.200 4V6" fill="none" stroke="#7c7c7c" stroke-width="1.600"/><rect x="0.500" y="5.500" width="10" height="7" rx="1" fill="#7c7c7c"/><circle cx="5.500" cy="9" r="1.200" fill="#5a5a5a"/></svg>
  <!-- bottom icons -->
  <svg style="left:12px;top:904px" width="16" height="16" viewBox="0 0 16 16" fill="none" stroke="#a6a6a6" stroke-width="1.800"><path d="M0.900 0.900H9.500L15.100 6.500V15.100H0.900Z"/><path d="M9.500 1V6.500H15"/></svg>
  <svg style="left:33px;top:904px" width="14" height="16" viewBox="0 0 14 16" fill="none" stroke="#555" stroke-width="1.400"><path d="M0.500 3.500H13.500M4.500 3.500Q4.500 1 7 1Q9.500 1 9.500 3.500M2 3.500L2.500 15.300H11.500L12 3.500"/><path d="M4.800 6V13M7 6V13M9.200 6V13" stroke-width="1.100"/></svg>
  <svg style="left:52px;top:904px" width="16" height="16" viewBox="0 0 16 16"><circle cx="8" cy="8" r="4.300" fill="none" stroke="#555" stroke-width="2.600"/><g stroke="#555" stroke-width="2.600"><path d="M8 0V3M8 13V16M0 8H3M13 8H16M2.300 2.300L4.500 4.500M11.500 11.500L13.700 13.700M2.300 13.700L4.500 11.500M11.500 4.500L13.700 2.300"/></g></svg>
  <svg style="left:73px;top:903px" width="14" height="17" viewBox="0 0 15 18" fill="none" stroke="#555" stroke-width="1.400" stroke-linejoin="round"><path d="M4.500 7L1 8.500V14L7.500 17L14 14V8.500L10.500 7M1 8.500L7.500 11.500L14 8.500M7.500 11.500V17"/><path d="M7.500 9V2M5 4L7.500 1.500L10 4"/></svg>
  <div class="dot dim" style="left:85.500px;top:903.500px;width:3.500px;height:3.500px"></div>
  <svg style="left:92px;top:904px" width="17" height="16" viewBox="0 0 17 16" fill="#555"><rect x="0" y="5.500" width="6" height="5.500"/><rect x="10.500" y="0" width="6" height="5.500"/><rect x="10.500" y="10.500" width="6" height="5.500"/><path d="M5 8L12 2.500M5 8.500L12 13.500" stroke="#555" stroke-width="1.600" fill="none"/></svg>
</div>
<!-- status bar -->
<div class="abs" style="left:0;top:1014px;width:1919px;height:1px;background:#484848"></div>
<div class="abs" style="left:0;top:1015px;width:1919px;height:25px;background:#343434"></div>
<div class="abs sb" style="left:1460px;top:1019px;width:40px;height:21px;background:#3e3e3e"></div>
<div class="abs sb" style="left:1502px;top:1019px;width:100px;height:21px;background:#3e3e3e"></div>
<div class="abs sb" style="left:1604px;top:1019px;width:140px;height:21px;background:#3e3e3e"></div>
<div class="abs sb" style="left:1747px;top:1019px;width:170px;height:21px;background:#3e3e3e"></div>
<div class="abs" style="left:1460px;top:1027px;width:40px;text-align:center;font-size:9.500px;color:#f0f0f0;white-space:nowrap;transform:scaleX(.9)">8 CPU</div>
<div class="abs" style="left:1502px;top:1024px;width:100px;text-align:center;font-size:12px;color:#ececec;white-space:nowrap;transform:scaleX(.86)">Zoom : 44%</div>
<div class="abs" style="left:1604px;top:1024px;width:140px;text-align:center;font-size:12px;color:#ececec;white-space:nowrap;transform:scaleX(.93)">1 objects - 1 lights</div>
<div class="abs" style="left:1747px;top:1024px;width:168px;text-align:center;font-size:12px;color:#ececec;white-space:nowrap;transform:scaleX(.93)">2 polygons</div>
<svg style="left:1899px;top:1025px" width="12" height="6" viewBox="0 0 12 6"><path d="M0 0H12L6 5.500Z" fill="#9a9a9a"/></svg>
<style>
#dlg{position:absolute;left:683px;top:207px;width:555px;height:620px;background:#f0f0f0;color:#000;box-shadow:inset 0 0 0 1px #fff,0 0 0 1px rgba(40,40,40,.6),0 6px 22px 4px rgba(0,0,0,.36);font-size:11px}
#dlg .l{position:absolute;white-space:nowrap;font-size:11px;color:#000;-webkit-text-stroke:.25px #000;transform-origin:0 50%;transform:scaleX(.95)}
#dlg .pl{position:absolute;white-space:nowrap;font-size:12px;color:#000;width:90px;text-align:center;left:4px;transform:scaleX(.91)}
#dlg .fn{position:absolute;white-space:nowrap;font-size:12px;color:#000;width:120px;text-align:center}
.btn{-webkit-text-stroke:.25px #000;position:absolute;background:#e1e1e1;border:1px solid #adadad;text-align:center;font-size:11px;color:#000;box-shadow:inset -1px -1px 0 #696969,inset 1px 1px 0 #fff}
.btn span{display:inline-block;transform:scaleX(.95)}
.grp{position:absolute;border:1px solid #a9a9a9;box-shadow:inset 1px 1px 0 #fff,1px 1px 0 #fff}
</style>
<div id="dlg">
  <!-- local coords = page - (683,207) -->
  <div class="abs" style="left:0;top:0;width:555px;height:30px;background:#fff"></div>
  <svg style="left:8px;top:6px" width="16" height="16" viewBox="0 0 16 16">
    <defs><clipPath id="ic2"><rect x="0" y="0" width="16" height="16" rx="3.500"/></clipPath></defs>
    <g clip-path="url(#ic2)"><rect width="16" height="16" fill="#9d97f5"/><path d="M0 7.500C3 5.500 6 5.500 8.500 7C11 5.500 13.500 5 16 6V16H0Z" fill="#7e78c6"/><path d="M0 10C2.500 8 5.500 8.500 8 9.500C10.500 8 13.500 8 16 9.500V16H0Z" fill="#625d9c"/><path d="M0 13C4 10 10 10 16 12.500V16H0Z" fill="#4a4678"/></g></svg>
  <div class="abs" style="left:29px;top:8px;font-size:12.500px;color:#000;white-space:nowrap;transform-origin:0 50%;transform:scaleX(.937)">Please select the object to load</div>
  <svg style="left:534px;top:9px" width="11" height="11" viewBox="0 0 11 11"><path d="M0.500 0.500L10.500 10.500M10.500 0.500L0.500 10.500" stroke="#111" stroke-width="1.200" fill="none"/></svg>
  <!-- look in -->
  <div class="l" style="left:54px;top:42px">Look in:</div>
  <div class="abs" style="left:100px;top:38px;width:362px;height:21px;background:#fff;border:1px solid #7a7a7a;border-right-color:#e3e3e3;border-bottom-color:#e3e3e3;box-shadow:inset 1px 1px 0 #696969"></div>
  <svg style="left:107px;top:41px" width="13" height="15" viewBox="0 0 13 15"><rect x="0" y="0" width="11" height="15" fill="#fbe18a"/><rect x="9.500" y="4" width="3" height="11" fill="#f3cf6a"/><rect x="0" y="13.500" width="12.500" height="1.500" fill="#e9bf55"/></svg>
  <div class="l" style="left:125px;top:42px">Plants</div>
  <svg style="left:462px;top:46px" width="8" height="5" viewBox="0 0 8 5"><path d="M0 0H8L4 4.500Z" fill="#000"/></svg>
  <!-- places bar -->
  <svg style="left:35px;top:70px" width="30" height="30" viewBox="0 0 30 30"><defs><linearGradient id="stg" x1="0" y1="0" x2="1" y2="1"><stop offset="0" stop-color="#4db8ff"/><stop offset="1" stop-color="#1a8be8"/></linearGradient></defs><path transform="rotate(12 17.500 14) translate(0 1) scale(.94)" d="M18 1.500L21 10.500L30 11.500L23 17L25.500 26.500L17.500 21L9.500 26.500L12.500 17.500L5.500 12L14.500 11Z" fill="url(#stg)"/><path d="M2 8H12M0 12.500H8M2 17H9M4 21.500H10" stroke="#9fd4ff" stroke-width="1" opacity=".85"/></svg>
  <div class="pl" style="top:102px">Quick access</div>
  <svg style="left:36px;top:126px" width="28" height="22" viewBox="0 0 28 22"><rect x="0" y="0" width="28" height="20" fill="#1e90f0"/><path d="M0 20L12 0H28V8L20 20Z" fill="#3aa6ff" opacity=".55"/><path d="M14 18.500H26" stroke="#fff" stroke-width="1" stroke-dasharray="1.500 1.500"/></svg>
  <div class="pl" style="top:154px">Desktop</div>
  <svg style="left:36px;top:175px" width="28" height="27" viewBox="0 0 28 27"><path d="M0 1H9L11 3H28V24H0Z" fill="#e8a92c"/><rect x="0" y="5" width="28" height="20" fill="#ffd766"/><rect x="5" y="15" width="18" height="10" fill="#2a8cea"/><rect x="10" y="20" width="8" height="5" fill="#ffd766"/></svg>
  <div class="pl" style="top:206px">Libraries</div>
  <svg style="left:34px;top:227px" width="32" height="28" viewBox="0 0 32 28"><path d="M10 1L30 4V18L10 16Z" fill="#46aaf2"/><path d="M10 1L30 4V9L10 7Z" fill="#7cc6fa"/><path d="M16 17L22 17.800V21H16Z" fill="#b8c4cc"/><path d="M11 21H25L27 23H13Z" fill="#9aa6ae"/><path d="M0 23L12 20L24 24L12 28Z" fill="#dfe3e6"/><path d="M2 23.300L12 21L21 24L12 27Z" fill="#c4cace"/></svg>
  <div class="pl" style="top:258px">This PC</div>
  <svg style="left:34px;top:279px" width="32" height="28" viewBox="0 0 32 28"><circle cx="20" cy="10" r="9.500" fill="#4a9fd8"/><path d="M13 5Q18 2 22 4Q24 8 20 9Q16 10 15 13Q12 12 11.500 9ZM22 12Q26 11 28.500 13Q27 18 22 19Q20 15 22 12Z" fill="#b7dcf2"/><path d="M2 12L18 14V24L2 22Z" fill="#46aaf2"/><path d="M2 12L18 14V17L2 15Z" fill="#7cc6fa"/><path d="M8 23L13 23.700V26H8Z" fill="#b8c4cc"/><path d="M5 26H16V27.500H5Z" fill="#9aa6ae"/></svg>
  <div class="pl" style="top:310px">Network</div>
  <!-- file list -->
  <div class="abs" id="flist" style="left:100px;top:66px;width:448px;height:297px;background:#fff;overflow:hidden">
    <!-- local = page - (783,273) -->
    <div class="abs" style="left:433px;top:0;width:15px;height:297px;background:#f0f0f0"></div>
    <div class="abs" style="left:433px;top:17px;width:15px;height:33px;background:#cdcdcd"></div>
    <svg style="left:436px;top:6px" width="9" height="6" viewBox="0 0 9 6" fill="none" stroke="#505050" stroke-width="1.500"><path d="M0.500 5L4.500 1L8.500 5"/></svg>
    <svg style="left:436px;top:285px" width="9" height="6" viewBox="0 0 9 6" fill="none" stroke="#505050" stroke-width="1.500"><path d="M0.500 1L4.500 5L8.500 1"/></svg>
    <div class="abs" style="left:3px;top:5px;width:100px;height:118px;background:#d9d9d9"></div>
    <!-- thumb 1 -->
    <svg style="left:9px;top:9px" width="92" height="93" viewBox="0 0 92 93">
      <defs><linearGradient id="sky1" x1="0" y1="0" x2="0" y2="1"><stop offset="0" stop-color="#475781"/><stop offset=".5" stop-color="#7f93bd"/><stop offset="1" stop-color="#b4c3dd"/></linearGradient>
      <linearGradient id="gr1" x1="0" y1="0" x2="0" y2="1"><stop offset="0" stop-color="#6b3826"/><stop offset="1" stop-color="#7d4731"/></linearGradient>
      <radialGradient id="fol" cx=".5" cy=".5" r=".5"><stop offset="0" stop-color="#587050"/><stop offset=".7" stop-color="#6b8a62" stop-opacity=".9"/><stop offset="1" stop-color="#7f9b80" stop-opacity="0"/></radialGradient>
      <linearGradient id="trk" x1="0" y1="0" x2="1" y2="0"><stop offset="0" stop-color="#6d664f"/><stop offset=".5" stop-color="#958b70"/><stop offset="1" stop-color="#6a614b"/></linearGradient></defs>
      <rect x="0" y="0" width="92" height="90" fill="#050305"/>
      <rect x="10" y="0" width="69" height="60" fill="url(#sky1)"/><rect x="10" y="60" width="69" height="30" fill="url(#gr1)"/>
      <ellipse cx="30" cy="67" rx="20" ry="4.500" fill="#3b2218" opacity=".55"/>
<ellipse cx="44.500" cy="28" rx="33" ry="22" fill="url(#fol)" opacity=".75"/><path d="M47.0 45.0L31.7 45.7M44.2 45.0L31.3 40.1M47.5 45.0L37.9 38.3M45.4 45.0L39.0 30.8M48.5 45.0L47.5 30.5M44.8 45.0L47.8 33.7M42.9 45.0L50.0 34.2M46.5 45.0L55.1 37.0M45.5 45.0L58.5 39.9M47.6 45.0L59.6 46.4" stroke="#4a4236" stroke-width="1.40" fill="none" opacity="0.75"/>
<path d="M31.7 45.7L21.9 43.9M31.7 45.7L22.4 46.3M31.7 45.7L22.8 47.3M31.3 40.1L23.3 33.8M31.3 40.1L25.4 33.7M31.3 40.1L26.9 33.0M37.9 38.3L33.1 32.4M37.9 38.3L31.9 34.2M39.0 30.8L34.3 22.6M39.0 30.8L33.3 20.8M47.5 30.5L44.9 22.6M47.5 30.5L44.9 21.6M47.8 33.7L50.9 26.4M47.8 33.7L44.9 27.0M47.8 33.7L48.0 25.4M50.0 34.2L55.0 27.6M50.0 34.2L59.0 31.2M55.1 37.0L61.9 34.4M55.1 37.0L58.1 31.1M58.5 39.9L67.7 37.2M58.5 39.9L65.7 34.8M59.6 46.4L67.0 47.1M59.6 46.4L66.1 43.4M59.6 46.4L68.5 47.5" stroke="#4a4236" stroke-width="0.95" fill="none" opacity="0.65"/>
<path d="M21.9 43.9L16.6 42.4M21.9 43.9L15.2 42.3M22.4 46.3L16.4 48.0M22.4 46.3L17.9 43.4M22.8 47.3L17.9 51.5M22.8 47.3L17.8 49.0M23.3 33.8L18.5 28.1M23.3 33.8L19.2 27.8M23.3 33.8L18.3 30.2M25.4 33.7L21.1 30.0M25.4 33.7L20.6 29.4M26.9 33.0L23.1 29.9M26.9 33.0L24.9 28.7M33.1 32.4L29.6 28.9M33.1 32.4L33.1 27.1M31.9 34.2L28.7 31.1M31.9 34.2L29.8 29.8M31.9 34.2L27.3 32.4M34.3 22.6L29.6 19.6M34.3 22.6L33.2 17.2M33.3 20.8L34.0 12.7M33.3 20.8L27.8 16.8M44.9 22.6L44.5 17.6M44.9 22.6L45.2 18.1M44.9 22.6L43.0 18.1M44.9 21.6L40.0 17.2M44.9 21.6L47.2 15.3M50.9 26.4L55.7 23.8M50.9 26.4L54.8 23.9M44.9 27.0L44.0 21.5M44.9 27.0L42.8 22.5M44.9 27.0L41.1 24.1M48.0 25.4L46.1 20.6M48.0 25.4L46.8 20.8M55.0 27.6L57.1 23.5M55.0 27.6L58.0 23.0M59.0 31.2L63.0 25.9M59.0 31.2L63.8 28.2M61.9 34.4L66.4 33.1M61.9 34.4L66.9 32.6M58.1 31.1L58.0 27.4M58.1 31.1L60.6 28.4M58.1 31.1L58.1 27.2M67.7 37.2L73.9 35.2M67.7 37.2L72.6 34.1M65.7 34.8L69.7 31.4M65.7 34.8L71.4 34.7M67.0 47.1L71.5 48.5M67.0 47.1L71.4 48.6M66.1 43.4L70.3 44.1M66.1 43.4L68.9 40.1M68.5 47.5L73.6 50.0M68.5 47.5L73.5 50.5" stroke="#4a4236" stroke-width="0.50" fill="none" opacity="0.55"/>
<g fill="#64825a" opacity="0.42"><circle cx="24.7" cy="42.6" r="1.3"/><circle cx="26.9" cy="47.2" r="1.7"/><circle cx="18.2" cy="45.7" r="2.1"/><circle cx="21.5" cy="41.1" r="1.9"/><circle cx="14.0" cy="39.4" r="2.8"/><circle cx="14.5" cy="40.7" r="3.0"/><circle cx="19.2" cy="41.1" r="2.9"/><circle cx="21.6" cy="44.4" r="2.4"/><circle cx="14.5" cy="41.6" r="1.4"/><circle cx="12.7" cy="39.7" r="1.9"/><circle cx="15.9" cy="39.3" r="2.5"/><circle cx="14.1" cy="41.2" r="2.7"/><circle cx="27.0" cy="43.4" r="2.4"/><circle cx="30.3" cy="48.0" r="1.2"/><circle cx="17.9" cy="44.9" r="2.3"/><circle cx="21.3" cy="49.6" r="2.3"/><circle cx="15.3" cy="47.1" r="2.2"/><circle cx="18.3" cy="45.6" r="2.6"/><circle cx="18.5" cy="50.1" r="1.5"/><circle cx="20.7" cy="47.3" r="1.6"/><circle cx="18.4" cy="42.5" r="1.6"/><circle cx="15.7" cy="40.9" r="1.6"/><circle cx="19.2" cy="46.4" r="1.7"/><circle cx="14.8" cy="46.4" r="2.3"/><circle cx="27.3" cy="46.6" r="1.7"/><circle cx="31.2" cy="43.4" r="1.8"/><circle cx="18.9" cy="53.1" r="1.3"/><circle cx="17.7" cy="51.9" r="1.6"/><circle cx="17.6" cy="54.5" r="2.8"/><circle cx="21.2" cy="51.2" r="2.2"/><circle cx="19.5" cy="51.4" r="1.9"/><circle cx="22.9" cy="51.0" r="2.0"/><circle cx="18.5" cy="45.9" r="1.5"/><circle cx="19.7" cy="51.2" r="2.0"/><circle cx="19.8" cy="50.6" r="2.5"/><circle cx="18.9" cy="50.5" r="2.0"/><circle cx="25.1" cy="38.8" r="1.8"/><circle cx="23.5" cy="33.4" r="1.5"/><circle cx="21.6" cy="32.1" r="2.2"/><circle cx="22.7" cy="32.9" r="2.0"/><circle cx="21.9" cy="30.8" r="2.2"/><circle cx="18.7" cy="26.1" r="2.7"/><circle cx="21.6" cy="28.0" r="2.5"/><circle cx="23.2" cy="31.7" r="2.0"/><circle cx="21.6" cy="31.8" r="2.0"/><circle cx="20.7" cy="24.9" r="1.7"/><circle cx="18.8" cy="28.7" r="1.8"/><circle cx="20.5" cy="28.5" r="1.5"/><circle cx="19.4" cy="31.5" r="1.4"/><circle cx="18.3" cy="32.0" r="1.7"/><circle cx="19.1" cy="30.7" r="1.8"/><circle cx="21.1" cy="27.2" r="2.0"/><circle cx="16.8" cy="29.6" r="1.6"/><circle cx="30.1" cy="35.6" r="1.9"/><circle cx="28.7" cy="39.4" r="2.2"/><circle cx="22.3" cy="29.1" r="1.7"/><circle cx="20.9" cy="29.1" r="1.3"/><circle cx="23.3" cy="30.9" r="2.0"/><circle cx="19.8" cy="32.5" r="2.3"/><circle cx="19.8" cy="32.2" r="2.3"/><circle cx="22.2" cy="32.2" r="1.7"/><circle cx="19.1" cy="30.4" r="2.1"/><circle cx="19.2" cy="27.9" r="1.4"/><circle cx="23.7" cy="28.2" r="2.9"/><circle cx="18.1" cy="26.5" r="2.5"/><circle cx="27.7" cy="37.2" r="1.8"/><circle cx="26.7" cy="35.1" r="1.2"/><circle cx="21.9" cy="30.6" r="1.8"/><circle cx="24.7" cy="32.2" r="1.3"/><circle cx="24.9" cy="28.7" r="2.3"/><circle cx="22.0" cy="28.7" r="2.2"/><circle cx="22.9" cy="29.1" r="2.6"/><circle cx="25.6" cy="33.5" r="2.3"/><circle cx="22.6" cy="31.8" r="1.7"/><circle cx="25.4" cy="30.0" r="2.4"/><circle cx="24.7" cy="31.2" r="2.0"/><circle cx="24.1" cy="30.8" r="1.7"/><circle cx="37.2" cy="37.8" r="1.4"/><circle cx="35.2" cy="34.5" r="1.6"/><circle cx="33.3" cy="29.8" r="1.3"/><circle cx="34.6" cy="30.2" r="1.7"/><circle cx="26.6" cy="28.3" r="2.2"/><circle cx="27.0" cy="26.7" r="2.4"/><circle cx="31.9" cy="26.6" r="2.8"/><circle cx="31.2" cy="27.3" r="2.2"/><circle cx="31.4" cy="30.9" r="2.0"/><circle cx="34.8" cy="25.8" r="2.3"/><circle cx="30.4" cy="26.5" r="2.4"/><circle cx="29.6" cy="24.7" r="2.5"/><circle cx="35.8" cy="33.0" r="1.6"/><circle cx="34.8" cy="34.1" r="2.3"/><circle cx="28.2" cy="33.6" r="1.8"/><circle cx="29.0" cy="32.2" r="2.1"/><circle cx="26.5" cy="32.4" r="2.4"/><circle cx="25.8" cy="32.1" r="1.5"/><circle cx="26.1" cy="31.7" r="1.8"/><circle cx="32.6" cy="29.1" r="2.1"/><circle cx="29.1" cy="35.4" r="2.0"/><circle cx="27.9" cy="27.5" r="3.0"/><circle cx="31.0" cy="31.8" r="1.6"/><circle cx="30.7" cy="29.0" r="1.8"/><circle cx="28.7" cy="31.0" r="2.2"/><circle cx="30.3" cy="32.5" r="2.2"/><circle cx="27.5" cy="33.0" r="2.3"/><circle cx="29.0" cy="31.8" r="1.6"/><circle cx="24.1" cy="30.7" r="1.5"/><circle cx="37.1" cy="21.9" r="1.8"/><circle cx="37.9" cy="24.7" r="2.2"/><circle cx="30.0" cy="19.9" r="1.5"/><circle cx="28.5" cy="23.3" r="1.6"/><circle cx="32.7" cy="20.8" r="2.5"/><circle cx="29.4" cy="22.3" r="1.6"/><circle cx="30.8" cy="18.4" r="2.5"/><circle cx="31.0" cy="18.6" r="1.3"/><circle cx="36.5" cy="18.6" r="1.6"/><circle cx="33.0" cy="15.9" r="2.6"/><circle cx="34.7" cy="15.2" r="1.8"/><circle cx="34.4" cy="19.8" r="2.4"/><circle cx="34.7" cy="29.4" r="1.7"/><circle cx="37.4" cy="30.4" r="1.8"/><circle cx="35.5" cy="14.6" r="1.8"/><circle cx="34.7" cy="14.5" r="2.1"/><circle cx="30.8" cy="14.7" r="2.1"/><circle cx="35.0" cy="15.0" r="2.9"/><circle cx="31.8" cy="13.9" r="2.4"/><circle cx="29.8" cy="14.5" r="2.4"/><circle cx="28.5" cy="20.5" r="1.9"/><circle cx="27.4" cy="16.0" r="2.1"/><circle cx="29.7" cy="17.0" r="1.6"/><circle cx="24.4" cy="18.4" r="2.5"/><circle cx="47.3" cy="22.8" r="1.4"/><circle cx="45.1" cy="25.2" r="1.7"/><circle cx="43.1" cy="20.6" r="2.2"/><circle cx="46.8" cy="15.5" r="2.1"/><circle cx="43.6" cy="19.3" r="1.4"/><circle cx="43.0" cy="20.3" r="1.6"/><circle cx="41.2" cy="15.5" r="2.5"/><circle cx="44.6" cy="18.7" r="2.2"/><circle cx="44.1" cy="18.3" r="1.4"/><circle cx="45.2" cy="17.0" r="1.5"/><circle cx="45.5" cy="19.5" r="1.4"/><circle cx="42.6" cy="20.9" r="2.7"/><circle cx="40.2" cy="18.4" r="1.4"/><circle cx="43.2" cy="18.6" r="1.9"/><circle cx="40.6" cy="21.0" r="1.8"/><circle cx="43.7" cy="18.9" r="1.6"/><circle cx="44.8" cy="17.7" r="2.1"/><circle cx="46.9" cy="24.4" r="1.3"/><circle cx="43.5" cy="23.5" r="1.8"/><circle cx="39.3" cy="21.8" r="1.2"/><circle cx="41.4" cy="20.8" r="1.7"/><circle cx="38.1" cy="15.9" r="1.7"/><circle cx="40.5" cy="16.3" r="2.6"/><circle cx="38.2" cy="16.3" r="1.8"/><circle cx="47.7" cy="15.4" r="1.4"/><circle cx="46.9" cy="13.3" r="1.4"/><circle cx="44.4" cy="16.6" r="2.8"/><circle cx="45.1" cy="17.1" r="1.9"/><circle cx="48.5" cy="17.5" r="2.4"/><circle cx="47.6" cy="28.5" r="1.9"/><circle cx="49.8" cy="29.2" r="2.0"/><circle cx="56.6" cy="25.0" r="1.8"/><circle cx="54.2" cy="24.8" r="2.0"/><circle cx="55.9" cy="22.6" r="1.5"/><circle cx="52.8" cy="23.0" r="2.3"/><circle cx="57.5" cy="25.1" r="1.9"/><circle cx="51.5" cy="25.9" r="2.0"/><circle cx="57.1" cy="25.1" r="2.2"/><circle cx="56.5" cy="24.6" r="1.7"/><circle cx="54.9" cy="26.3" r="1.8"/><circle cx="58.1" cy="24.2" r="2.0"/><circle cx="47.5" cy="33.2" r="2.3"/><circle cx="45.0" cy="26.4" r="2.0"/><circle cx="42.1" cy="23.1" r="2.2"/><circle cx="41.6" cy="25.0" r="1.3"/><circle cx="43.4" cy="19.6" r="2.4"/><circle cx="44.5" cy="22.3" r="2.4"/><circle cx="44.3" cy="21.0" r="1.8"/><circle cx="43.4" cy="22.4" r="2.3"/><circle cx="43.3" cy="22.5" r="1.6"/><circle cx="43.2" cy="22.9" r="2.1"/><circle cx="41.6" cy="20.1" r="2.7"/><circle cx="41.6" cy="20.0" r="2.9"/><circle cx="41.7" cy="25.7" r="1.7"/><circle cx="43.8" cy="25.0" r="2.2"/><circle cx="43.5" cy="21.1" r="2.5"/><circle cx="38.4" cy="23.1" r="2.0"/><circle cx="43.0" cy="24.5" r="2.1"/><circle cx="50.2" cy="30.4" r="1.9"/><circle cx="50.2" cy="25.4" r="2.2"/><circle cx="47.9" cy="23.9" r="1.3"/><circle cx="47.1" cy="21.9" r="1.3"/><circle cx="46.8" cy="19.9" r="2.5"/><circle cx="46.1" cy="23.4" r="2.9"/><circle cx="43.1" cy="22.2" r="2.6"/><circle cx="46.3" cy="23.9" r="2.3"/><circle cx="46.0" cy="22.8" r="2.0"/><circle cx="48.8" cy="21.3" r="1.9"/><circle cx="45.6" cy="22.9" r="2.2"/><circle cx="43.6" cy="20.4" r="1.8"/><circle cx="54.2" cy="33.5" r="1.5"/><circle cx="50.9" cy="27.6" r="2.2"/><circle cx="55.8" cy="25.0" r="1.8"/><circle cx="54.0" cy="29.1" r="1.7"/><circle cx="56.9" cy="21.1" r="1.8"/><circle cx="60.3" cy="24.7" r="2.2"/><circle cx="54.0" cy="22.9" r="2.6"/><circle cx="58.7" cy="24.1" r="1.2"/><circle cx="57.6" cy="25.6" r="2.2"/><circle cx="60.3" cy="25.5" r="2.0"/><circle cx="61.5" cy="24.5" r="2.8"/><circle cx="55.5" cy="24.7" r="2.1"/><circle cx="53.6" cy="31.4" r="1.8"/><circle cx="55.5" cy="30.4" r="1.4"/><circle cx="59.8" cy="27.3" r="2.0"/><circle cx="62.3" cy="25.7" r="1.7"/><circle cx="62.8" cy="23.3" r="2.0"/><circle cx="63.9" cy="22.9" r="2.7"/><circle cx="60.1" cy="23.6" r="2.4"/><circle cx="63.8" cy="32.0" r="1.9"/><circle cx="59.1" cy="29.1" r="1.6"/><circle cx="66.7" cy="28.4" r="2.1"/><circle cx="66.4" cy="30.9" r="1.6"/><circle cx="60.4" cy="25.2" r="2.0"/><circle cx="60.2" cy="37.0" r="1.3"/><circle cx="56.8" cy="34.6" r="1.6"/><circle cx="61.3" cy="36.3" r="1.9"/><circle cx="64.6" cy="34.3" r="1.7"/><circle cx="65.6" cy="35.2" r="2.3"/><circle cx="67.7" cy="33.9" r="1.5"/><circle cx="64.4" cy="33.8" r="1.6"/><circle cx="64.1" cy="33.1" r="1.3"/><circle cx="63.8" cy="34.2" r="1.3"/><circle cx="68.6" cy="30.3" r="2.8"/><circle cx="66.0" cy="31.6" r="2.7"/><circle cx="66.7" cy="30.5" r="1.6"/><circle cx="54.5" cy="35.9" r="2.0"/><circle cx="59.5" cy="35.3" r="2.2"/><circle cx="58.4" cy="25.1" r="1.3"/><circle cx="58.0" cy="30.1" r="1.2"/><circle cx="58.7" cy="25.1" r="2.6"/><circle cx="58.8" cy="28.1" r="1.8"/><circle cx="61.2" cy="25.1" r="1.5"/><circle cx="58.7" cy="31.1" r="2.3"/><circle cx="57.5" cy="29.8" r="2.2"/><circle cx="57.9" cy="29.9" r="1.8"/><circle cx="59.2" cy="25.4" r="2.6"/><circle cx="60.7" cy="30.8" r="2.1"/><circle cx="60.8" cy="27.4" r="1.3"/><circle cx="55.6" cy="28.5" r="1.9"/><circle cx="59.2" cy="25.2" r="1.6"/><circle cx="58.1" cy="28.3" r="2.1"/><circle cx="58.6" cy="29.6" r="1.6"/><circle cx="65.7" cy="40.4" r="1.6"/><circle cx="60.5" cy="38.1" r="2.3"/><circle cx="71.8" cy="37.6" r="1.3"/><circle cx="72.2" cy="35.2" r="2.1"/><circle cx="71.7" cy="36.9" r="2.3"/><circle cx="71.7" cy="34.2" r="2.6"/><circle cx="71.1" cy="37.4" r="2.8"/><circle cx="73.3" cy="35.0" r="1.3"/><circle cx="66.6" cy="33.7" r="2.1"/><circle cx="75.8" cy="33.6" r="2.1"/><circle cx="69.6" cy="33.7" r="2.9"/><circle cx="72.9" cy="35.0" r="2.5"/><circle cx="60.3" cy="36.2" r="1.5"/><circle cx="61.3" cy="37.1" r="2.0"/><circle cx="71.3" cy="32.0" r="1.5"/><circle cx="70.8" cy="31.8" r="2.0"/><circle cx="72.6" cy="30.3" r="2.7"/><circle cx="69.9" cy="29.2" r="1.5"/><circle cx="72.8" cy="31.2" r="2.1"/><circle cx="68.1" cy="36.2" r="1.5"/><circle cx="70.8" cy="35.4" r="1.4"/><circle cx="69.3" cy="35.9" r="2.6"/><circle cx="68.6" cy="37.7" r="1.6"/><circle cx="69.1" cy="32.3" r="2.1"/><circle cx="67.1" cy="48.2" r="1.9"/><circle cx="62.9" cy="44.0" r="1.9"/><circle cx="73.6" cy="47.0" r="1.6"/><circle cx="68.9" cy="47.9" r="1.7"/><circle cx="74.9" cy="46.2" r="2.4"/><circle cx="73.3" cy="49.8" r="1.4"/><circle cx="74.6" cy="47.4" r="2.8"/><circle cx="71.9" cy="47.5" r="2.1"/><circle cx="71.1" cy="48.8" r="2.2"/><circle cx="69.0" cy="48.6" r="1.4"/><circle cx="73.4" cy="50.2" r="2.7"/><circle cx="68.2" cy="48.8" r="2.2"/><circle cx="68.1" cy="41.9" r="2.2"/><circle cx="63.9" cy="45.0" r="1.5"/><circle cx="65.5" cy="46.3" r="1.6"/><circle cx="67.4" cy="41.5" r="1.9"/><circle cx="70.6" cy="46.0" r="2.7"/><circle cx="71.9" cy="46.5" r="2.2"/><circle cx="66.8" cy="43.7" r="2.1"/><circle cx="69.6" cy="44.4" r="1.8"/><circle cx="65.0" cy="43.4" r="2.0"/><circle cx="69.7" cy="39.9" r="2.4"/><circle cx="69.6" cy="42.6" r="2.8"/><circle cx="66.8" cy="41.0" r="2.1"/><circle cx="64.9" cy="47.5" r="2.3"/><circle cx="62.8" cy="44.1" r="1.3"/><circle cx="73.4" cy="50.9" r="2.0"/><circle cx="70.3" cy="48.3" r="1.7"/><circle cx="70.3" cy="49.7" r="2.6"/><circle cx="75.0" cy="52.2" r="2.5"/><circle cx="75.5" cy="52.2" r="2.9"/><circle cx="73.2" cy="52.1" r="2.1"/><circle cx="69.7" cy="48.3" r="1.5"/><circle cx="74.7" cy="52.1" r="1.7"/><circle cx="73.7" cy="52.5" r="2.0"/><circle cx="70.6" cy="51.1" r="2.0"/></g>
      <path d="M40 45Q45.500 41 51 45Q55.500 58 52.500 69Q46 73.500 40 69Q35.500 57 40 45Z" fill="url(#trk)"/>
    </svg>
    <div class="fn" style="left:-5px;top:107px">Baobab-1-AMLM...</div>
    <!-- thumb 2 (right, partially hidden) -->
    <svg style="left:322px;top:9px" width="92" height="93" viewBox="0 0 92 93">
      <rect x="0" y="0" width="92" height="90" fill="#050305"/>
      <rect x="10" y="0" width="71" height="60" fill="url(#sky1)"/><rect x="10" y="60" width="71" height="30" fill="url(#gr1)"/>
      <path d="M42.4 46.0L24.3 43.0M41.7 46.0L30.0 40.1M42.8 46.0L33.2 33.6M44.6 46.0L39.9 32.5M40.0 46.0L44.9 30.1M41.7 46.0L49.3 32.5M44.1 46.0L55.5 36.6M39.9 46.0L53.2 42.6" stroke="#4e463c" stroke-width="1.40" fill="none" opacity="0.75"/>
<path d="M24.3 43.0L11.1 41.7M24.3 43.0L10.8 40.6M30.0 40.1L21.4 38.4M30.0 40.1L25.8 32.8M33.2 33.6L33.6 23.2M33.2 33.6L25.3 27.1M39.9 32.5L34.0 25.2M39.9 32.5L33.1 26.8M44.9 30.1L54.8 21.9M44.9 30.1L46.5 17.9M49.3 32.5L55.9 24.1M49.3 32.5L56.2 25.6M55.5 36.6L64.1 30.5M55.5 36.6L62.8 28.8M55.5 36.6L60.2 30.0M53.2 42.6L61.6 43.3M53.2 42.6L60.5 37.6" stroke="#4e463c" stroke-width="0.95" fill="none" opacity="0.65"/>
<path d="M11.1 41.7L2.6 39.3M11.1 41.7L3.0 45.3M11.1 41.7L3.8 45.3M10.8 40.6L0.8 41.4M10.8 40.6L0.6 39.5M10.8 40.6L1.6 44.6M21.4 38.4L17.0 40.3M21.4 38.4L15.4 38.4M21.4 38.4L16.1 36.8M25.8 32.8L22.1 28.5M25.8 32.8L26.8 27.7M33.6 23.2L34.4 15.6M33.6 23.2L32.3 16.9M25.3 27.1L19.2 22.5M25.3 27.1L23.9 20.3M34.0 25.2L27.5 22.5M34.0 25.2L30.8 20.8M33.1 26.8L31.0 22.3M33.1 26.8L27.7 25.7M33.1 26.8L28.1 24.0M54.8 21.9L64.6 20.1M54.8 21.9L58.6 15.0M46.5 17.9L48.6 10.5M46.5 17.9L41.8 10.0M55.9 24.1L63.4 21.2M55.9 24.1L60.6 19.9M55.9 24.1L57.5 17.7M56.2 25.6L62.1 23.9M56.2 25.6L61.5 23.7M64.1 30.5L69.5 25.7M64.1 30.5L68.2 26.3M64.1 30.5L69.9 26.0M62.8 28.8L68.6 23.4M62.8 28.8L67.7 24.9M62.8 28.8L68.2 25.7M60.2 30.0L63.6 26.9M60.2 30.0L61.4 25.5M61.6 43.3L66.1 40.7M61.6 43.3L66.1 46.4M61.6 43.3L65.7 46.4M60.5 37.6L63.1 32.4M60.5 37.6L66.6 35.7M60.5 37.6L64.3 33.5" stroke="#4e463c" stroke-width="0.50" fill="none" opacity="0.55"/>
<g fill="#6a745e" opacity="0.3"><circle cx="20.4" cy="42.3" r="1.9"/><circle cx="18.3" cy="40.3" r="1.8"/><circle cx="5.9" cy="41.7" r="2.0"/><circle cx="6.8" cy="37.3" r="1.2"/><circle cx="5.2" cy="39.9" r="2.6"/><circle cx="1.4" cy="39.8" r="1.7"/><circle cx="0.7" cy="38.1" r="1.4"/><circle cx="6.7" cy="46.4" r="1.3"/><circle cx="8.8" cy="43.5" r="1.2"/><circle cx="3.4" cy="43.0" r="1.6"/><circle cx="1.5" cy="42.7" r="1.4"/><circle cx="4.3" cy="43.6" r="2.9"/><circle cx="4.8" cy="45.0" r="1.4"/><circle cx="4.5" cy="43.4" r="1.2"/><circle cx="3.2" cy="47.9" r="1.6"/><circle cx="5.3" cy="42.4" r="2.1"/><circle cx="3.7" cy="46.4" r="1.7"/><circle cx="12.4" cy="40.3" r="1.7"/><circle cx="7.9" cy="42.9" r="2.4"/><circle cx="5.7" cy="43.1" r="2.0"/><circle cx="10.0" cy="39.2" r="1.5"/><circle cx="2.7" cy="40.3" r="1.9"/><circle cx="-2.2" cy="38.9" r="2.3"/><circle cx="-1.0" cy="42.0" r="2.0"/><circle cx="4.7" cy="42.1" r="1.4"/><circle cx="9.1" cy="42.1" r="1.5"/><circle cx="-1.5" cy="40.9" r="2.9"/><circle cx="-1.5" cy="42.2" r="2.8"/><circle cx="1.4" cy="39.0" r="1.6"/><circle cx="7.7" cy="41.1" r="2.2"/><circle cx="2.9" cy="41.6" r="2.1"/><circle cx="-1.5" cy="43.0" r="2.3"/><circle cx="4.0" cy="45.3" r="1.8"/><circle cx="4.5" cy="42.9" r="1.4"/><circle cx="19.1" cy="36.3" r="1.7"/><circle cx="26.8" cy="39.3" r="2.3"/><circle cx="18.5" cy="42.9" r="1.2"/><circle cx="18.0" cy="41.2" r="1.6"/><circle cx="20.5" cy="37.7" r="2.3"/><circle cx="18.7" cy="42.7" r="2.6"/><circle cx="18.4" cy="42.0" r="2.9"/><circle cx="18.0" cy="37.9" r="2.1"/><circle cx="16.4" cy="39.1" r="1.7"/><circle cx="16.0" cy="39.0" r="1.5"/><circle cx="16.4" cy="41.4" r="2.8"/><circle cx="17.0" cy="37.7" r="2.6"/><circle cx="14.2" cy="38.5" r="1.2"/><circle cx="17.5" cy="35.6" r="2.0"/><circle cx="16.1" cy="37.5" r="2.9"/><circle cx="14.4" cy="33.9" r="1.9"/><circle cx="17.4" cy="35.0" r="1.7"/><circle cx="29.8" cy="34.6" r="2.0"/><circle cx="27.7" cy="38.7" r="2.3"/><circle cx="21.7" cy="30.5" r="2.2"/><circle cx="23.7" cy="31.6" r="1.5"/><circle cx="19.8" cy="28.2" r="1.8"/><circle cx="20.1" cy="28.0" r="2.4"/><circle cx="22.0" cy="27.4" r="2.7"/><circle cx="23.3" cy="33.2" r="1.2"/><circle cx="27.0" cy="27.6" r="2.1"/><circle cx="23.5" cy="25.5" r="2.1"/><circle cx="23.5" cy="29.6" r="1.8"/><circle cx="24.3" cy="24.9" r="2.4"/><circle cx="33.2" cy="27.1" r="1.2"/><circle cx="34.7" cy="25.1" r="1.5"/><circle cx="37.1" cy="16.2" r="2.2"/><circle cx="32.6" cy="16.6" r="2.3"/><circle cx="33.6" cy="15.3" r="1.7"/><circle cx="37.1" cy="12.6" r="2.3"/><circle cx="35.5" cy="15.6" r="2.7"/><circle cx="29.9" cy="19.2" r="2.2"/><circle cx="30.1" cy="15.7" r="1.7"/><circle cx="29.4" cy="15.8" r="3.0"/><circle cx="35.3" cy="15.5" r="2.5"/><circle cx="28.9" cy="17.0" r="1.5"/><circle cx="31.8" cy="28.7" r="2.2"/><circle cx="25.7" cy="29.9" r="2.0"/><circle cx="19.7" cy="23.8" r="1.7"/><circle cx="20.2" cy="24.0" r="2.1"/><circle cx="18.8" cy="22.8" r="2.7"/><circle cx="19.6" cy="20.4" r="2.2"/><circle cx="22.1" cy="21.0" r="2.5"/><circle cx="23.1" cy="20.0" r="1.9"/><circle cx="24.6" cy="23.2" r="1.3"/><circle cx="20.4" cy="19.5" r="2.3"/><circle cx="20.7" cy="22.8" r="2.3"/><circle cx="27.3" cy="18.0" r="1.5"/><circle cx="37.2" cy="31.6" r="2.3"/><circle cx="35.1" cy="26.0" r="1.9"/><circle cx="30.1" cy="22.7" r="2.0"/><circle cx="29.7" cy="24.5" r="1.3"/><circle cx="29.1" cy="20.3" r="2.2"/><circle cx="25.8" cy="20.7" r="2.2"/><circle cx="27.1" cy="21.8" r="2.1"/><circle cx="33.4" cy="24.1" r="1.8"/><circle cx="31.8" cy="23.4" r="1.5"/><circle cx="32.4" cy="22.6" r="2.8"/><circle cx="29.5" cy="19.7" r="2.9"/><circle cx="28.8" cy="23.8" r="2.8"/><circle cx="33.0" cy="25.5" r="2.2"/><circle cx="37.6" cy="26.9" r="1.7"/><circle cx="30.8" cy="25.6" r="1.6"/><circle cx="32.3" cy="22.3" r="2.4"/><circle cx="33.4" cy="24.2" r="2.2"/><circle cx="27.7" cy="23.9" r="2.4"/><circle cx="33.9" cy="22.2" r="1.7"/><circle cx="29.6" cy="27.4" r="1.9"/><circle cx="32.1" cy="23.8" r="1.3"/><circle cx="27.0" cy="25.3" r="2.0"/><circle cx="25.7" cy="24.9" r="2.4"/><circle cx="24.5" cy="23.9" r="2.1"/><circle cx="29.0" cy="21.7" r="2.2"/><circle cx="28.0" cy="27.3" r="2.3"/><circle cx="31.0" cy="26.6" r="2.3"/><circle cx="26.0" cy="24.5" r="1.9"/><circle cx="30.0" cy="22.6" r="1.6"/><circle cx="54.3" cy="25.3" r="1.7"/><circle cx="50.3" cy="22.6" r="1.8"/><circle cx="61.3" cy="18.9" r="2.4"/><circle cx="58.1" cy="20.5" r="1.4"/><circle cx="61.7" cy="20.2" r="2.2"/><circle cx="62.6" cy="17.9" r="2.0"/><circle cx="65.2" cy="17.8" r="1.6"/><circle cx="58.9" cy="18.3" r="1.2"/><circle cx="55.3" cy="17.7" r="1.8"/><circle cx="58.0" cy="15.2" r="2.8"/><circle cx="55.8" cy="14.7" r="2.4"/><circle cx="59.0" cy="16.1" r="2.9"/><circle cx="48.6" cy="25.3" r="1.9"/><circle cx="45.6" cy="21.3" r="1.5"/><circle cx="48.5" cy="14.6" r="1.5"/><circle cx="46.9" cy="9.1" r="1.5"/><circle cx="45.4" cy="8.5" r="2.6"/><circle cx="47.8" cy="12.9" r="2.6"/><circle cx="45.4" cy="13.5" r="2.9"/><circle cx="43.6" cy="16.0" r="1.5"/><circle cx="46.0" cy="14.0" r="1.8"/><circle cx="45.2" cy="11.9" r="2.4"/><circle cx="39.2" cy="10.8" r="2.1"/><circle cx="39.8" cy="7.3" r="2.2"/><circle cx="53.6" cy="27.4" r="2.2"/><circle cx="50.7" cy="26.9" r="1.8"/><circle cx="60.6" cy="20.6" r="2.0"/><circle cx="61.7" cy="22.9" r="2.1"/><circle cx="61.2" cy="19.7" r="3.0"/><circle cx="66.3" cy="23.4" r="1.5"/><circle cx="60.3" cy="19.8" r="2.1"/><circle cx="56.5" cy="18.8" r="2.0"/><circle cx="59.9" cy="20.5" r="1.8"/><circle cx="58.5" cy="19.0" r="2.6"/><circle cx="62.9" cy="17.4" r="1.6"/><circle cx="62.7" cy="20.7" r="2.6"/><circle cx="58.5" cy="20.2" r="2.0"/><circle cx="56.4" cy="18.0" r="2.1"/><circle cx="60.4" cy="17.2" r="2.0"/><circle cx="54.6" cy="19.9" r="1.5"/><circle cx="54.5" cy="18.1" r="2.2"/><circle cx="52.6" cy="25.0" r="2.0"/><circle cx="50.6" cy="31.4" r="2.0"/><circle cx="59.6" cy="26.8" r="1.6"/><circle cx="60.3" cy="27.0" r="2.0"/><circle cx="60.5" cy="24.1" r="3.0"/><circle cx="61.8" cy="22.3" r="2.9"/><circle cx="63.7" cy="24.0" r="1.5"/><circle cx="60.8" cy="25.9" r="2.1"/><circle cx="58.5" cy="22.5" r="1.9"/><circle cx="59.3" cy="21.2" r="2.1"/><circle cx="64.0" cy="25.6" r="1.8"/><circle cx="58.4" cy="21.6" r="1.9"/><circle cx="56.1" cy="35.9" r="2.3"/><circle cx="59.4" cy="32.3" r="2.1"/><circle cx="70.0" cy="26.4" r="1.8"/><circle cx="68.9" cy="26.9" r="1.4"/><circle cx="69.4" cy="27.5" r="1.5"/><circle cx="70.3" cy="23.0" r="2.6"/><circle cx="72.9" cy="24.8" r="1.4"/><circle cx="66.9" cy="25.0" r="1.6"/><circle cx="63.0" cy="31.8" r="2.3"/><circle cx="66.4" cy="24.3" r="2.4"/><circle cx="69.5" cy="25.3" r="2.0"/><circle cx="68.4" cy="25.0" r="2.8"/><circle cx="65.0" cy="30.7" r="2.3"/><circle cx="66.0" cy="26.7" r="2.2"/><circle cx="68.5" cy="24.2" r="2.0"/><circle cx="70.5" cy="26.6" r="2.2"/><circle cx="69.9" cy="25.7" r="2.8"/><circle cx="63.2" cy="31.8" r="1.9"/><circle cx="61.9" cy="29.0" r="2.3"/><circle cx="64.8" cy="22.6" r="2.3"/><circle cx="67.1" cy="24.3" r="1.8"/><circle cx="67.0" cy="26.3" r="2.5"/><circle cx="66.7" cy="20.4" r="2.2"/><circle cx="67.7" cy="25.1" r="2.5"/><circle cx="63.7" cy="25.8" r="2.2"/><circle cx="66.9" cy="29.2" r="1.5"/><circle cx="67.9" cy="22.8" r="2.6"/><circle cx="64.2" cy="26.8" r="2.8"/><circle cx="70.0" cy="22.4" r="1.8"/><circle cx="66.0" cy="29.6" r="1.9"/><circle cx="66.5" cy="27.7" r="1.7"/><circle cx="71.1" cy="23.2" r="2.7"/><circle cx="66.2" cy="25.9" r="2.2"/><circle cx="65.8" cy="27.7" r="1.9"/><circle cx="57.7" cy="34.5" r="1.6"/><circle cx="56.8" cy="30.8" r="1.8"/><circle cx="63.4" cy="26.7" r="1.9"/><circle cx="59.4" cy="31.0" r="2.2"/><circle cx="61.6" cy="27.6" r="1.9"/><circle cx="62.8" cy="27.2" r="1.9"/><circle cx="62.5" cy="26.3" r="2.5"/><circle cx="60.1" cy="29.0" r="1.9"/><circle cx="60.1" cy="28.3" r="1.3"/><circle cx="58.9" cy="23.1" r="2.5"/><circle cx="62.8" cy="23.6" r="2.0"/><circle cx="63.7" cy="26.0" r="1.5"/><circle cx="63.2" cy="41.0" r="1.4"/><circle cx="57.7" cy="42.8" r="2.3"/><circle cx="68.1" cy="43.0" r="2.0"/><circle cx="62.0" cy="40.4" r="1.6"/><circle cx="67.2" cy="38.3" r="2.0"/><circle cx="66.2" cy="42.4" r="2.7"/><circle cx="66.9" cy="38.6" r="2.6"/><circle cx="64.1" cy="42.8" r="2.1"/><circle cx="66.1" cy="47.7" r="2.2"/><circle cx="64.0" cy="49.1" r="2.4"/><circle cx="64.0" cy="43.9" r="1.8"/><circle cx="66.6" cy="47.6" r="1.9"/><circle cx="61.9" cy="48.1" r="1.4"/><circle cx="65.7" cy="46.5" r="1.9"/><circle cx="64.1" cy="48.8" r="3.0"/><circle cx="67.9" cy="47.0" r="1.6"/><circle cx="68.0" cy="45.1" r="2.8"/><circle cx="57.7" cy="38.5" r="1.3"/><circle cx="53.6" cy="43.9" r="2.3"/><circle cx="65.3" cy="33.6" r="2.0"/><circle cx="60.6" cy="32.7" r="1.2"/><circle cx="63.3" cy="30.1" r="2.0"/><circle cx="61.9" cy="30.2" r="1.8"/><circle cx="66.1" cy="29.7" r="2.7"/><circle cx="64.0" cy="34.1" r="1.6"/><circle cx="68.6" cy="36.2" r="1.7"/><circle cx="65.1" cy="38.1" r="2.1"/><circle cx="69.4" cy="36.9" r="2.7"/><circle cx="63.9" cy="33.4" r="2.9"/><circle cx="59.9" cy="37.6" r="1.6"/><circle cx="62.9" cy="33.9" r="1.6"/><circle cx="66.3" cy="35.8" r="2.8"/><circle cx="62.5" cy="35.5" r="1.8"/><circle cx="66.9" cy="36.3" r="2.2"/></g>
      <path d="M36 46Q42 42 48 46Q53 58 50 71Q43 75 36 71Q32 58 36 46Z" fill="url(#trk)"/><ellipse cx="51" cy="67" rx="6" ry="7.500" fill="#7b7159"/>
    </svg>
    <div class="fn" style="left:310px;top:107px;letter-spacing:.2px">Baobab-4-AMLM...</div>
    <!-- vlc cones -->
    <svg style="left:81px;top:80px" width="20" height="22" viewBox="0 0 20 22"><path d="M10 0.500Q11.500 0.500 12 2L16 15H4L8 2Q8.500 0.500 10 0.500Z" fill="#f58a1c"/><path d="M7.300 5H12.700L13.800 8.500H6.200Z" fill="#f2f2f2"/><path d="M5.200 11.500H14.800L15.600 14H4.400Z" fill="#e8e8e8"/><path d="M2.500 14.500H17.500L19.500 20.500Q10 22.500 0.500 20.500Z" fill="#f79a20"/></svg>
    <svg style="left:397px;top:80px" width="20" height="22" viewBox="0 0 20 22"><path d="M10 0.500Q11.500 0.500 12 2L16 15H4L8 2Q8.500 0.500 10 0.500Z" fill="#f58a1c"/><path d="M7.300 5H12.700L13.800 8.500H6.200Z" fill="#f2f2f2"/><path d="M5.200 11.500H14.800L15.600 14H4.400Z" fill="#e8e8e8"/><path d="M2.500 14.500H17.500L19.500 20.500Q10 22.500 0.500 20.500Z" fill="#f79a20"/></svg>
    <!-- bark thumb -->
    <svg style="left:31px;top:157px" width="46" height="92" viewBox="0 0 46 92"><defs><filter id="nz" x="0" y="0" width="100%" height="100%"><feTurbulence type="fractalNoise" baseFrequency="0.550 0.180" numOctaves="3" seed="4"/><feColorMatrix type="matrix" values="0 0 0 0 0.520  0 0 0 0 0.520  0 0 0 0 0.520  .9 .9 .9 0 -0.850"/></filter></defs><rect x="0" y="0" width="45" height="90" fill="#7c7c7c"/><rect x="0" y="0" width="45" height="90" fill="#505050" filter="url(#nz)" opacity=".9"/><rect x="45" y="1" width="1" height="90" fill="#c8c8c8"/><rect x="1" y="90" width="45" height="1" fill="#c8c8c8"/></svg>
    <div class="fn" style="left:-5px;top:255px">Boab-Bark-B.jpg</div>
    <!-- cap thumb -->
    <svg style="left:344px;top:157px" width="72" height="92" viewBox="0 0 72 92"><defs><radialGradient id="capg" cx="36" cy="45" r="58" gradientUnits="userSpaceOnUse"><stop offset="0" stop-color="#b4b4b4"/><stop offset=".45" stop-color="#c2c2c2"/><stop offset=".72" stop-color="#a0a0a0"/><stop offset=".9" stop-color="#5a5a5a"/><stop offset="1" stop-color="#1e1e1e"/></radialGradient><filter id="nz2" x="0" y="0" width="100%" height="100%"><feTurbulence type="fractalNoise" baseFrequency="0.350" numOctaves="3" seed="9"/><feColorMatrix type="matrix" values="0 0 0 0 0.200  0 0 0 0 0.200  0 0 0 0 0.200  1.600 1.600 1.600 0 -2.150"/></filter><clipPath id="capc"><rect x="0" y="0" width="70" height="90"/></clipPath></defs><g clip-path="url(#capc)"><rect x="0" y="0" width="70" height="90" fill="url(#capg)"/><path d="M43.6 48.7L74.9 64.0M43.6 47.9L61.1 54.6M25.4 50.4L8.3 59.2M37.6 54.4L48.1 116.4M47.8 48.5L73.8 56.4M38.1 47.7L60.9 76.8M31.8 40.0L2.3 4.9M38.5 46.0L68.6 58.6M29.6 41.2L1.7 24.5M38.9 35.0L46.2 9.2M35.3 39.6L26.5 -28.4M41.2 49.7L82.3 87.5M30.5 35.3L9.6 -1.7M40.1 40.9L78.4 2.9M43.1 33.7L62.1 3.9M34.6 42.7L5.1 -6.5M34.6 51.5L23.4 102.1M43.5 46.1L69.1 49.7M39.4 48.6L66.6 77.3M38.1 42.9L68.8 10.7M39.5 41.0L66.0 10.5M28.0 54.8L-10.0 101.5M36.8 52.8L41.7 99.2M35.8 47.0L32.3 90.8M33.0 37.4L15.6 -7.0M34.8 42.6L4.7 -17.6M30.7 49.2L12.5 63.9M34.2 42.9L17.1 23.8M37.9 45.6L66.8 55.6M41.1 48.8L57.1 60.6M35.9 51.2L35.4 88.2M44.7 53.5L89.5 97.1M40.9 48.7L66.6 67.9M37.9 41.5L48.4 22.0M33.8 44.4L-13.5 31.2M48.2 43.3L95.3 36.9M37.2 36.7L44.8 -18.3M33.8 49.1L4.5 102.5M40.5 35.1L51.1 12.0M29.8 44.3L9.7 42.1M31.2 32.4L19.3 0.7M48.8 39.7L103.1 17.0M37.5 49.2L54.5 98.1M45.8 37.9L75.7 16.3M29.1 34.1L1.8 -9.3M36.0 37.3L36.0 11.1" stroke="#f4f4f4" stroke-width=".8" opacity=".75" fill="none"/><path d="M34.3 48.4L10.3 96.5M33.4 46.1L9.0 57.0M30.0 41.9L-29.3 10.6M37.7 41.2L57.8 -4.5M33.0 38.5L18.8 8.1M28.6 41.3L-25.4 14.0M40.5 51.4L51.6 67.0M28.6 40.0L-3.6 18.3M27.6 33.9L-3.8 -7.8M38.0 46.8L83.0 87.6M24.0 41.1L-26.8 24.8M38.4 48.3L57.3 74.7M30.0 51.4L-13.5 98.2M38.3 32.7L48.1 -18.7M37.0 48.8L46.8 85.6M42.6 38.3L58.8 22.0M28.4 46.7L7.4 51.2M43.9 42.5L66.8 35.2M35.6 51.4L33.7 78.3M48.2 43.8L101.0 38.8M41.3 45.9L73.4 51.6M32.9 48.5L12.0 72.3M29.4 35.5L19.3 21.0M37.5 39.2L51.8 -18.1" stroke="#3a3a3a" stroke-width=".7" opacity=".6" fill="none"/><rect x="0" y="0" width="70" height="90" filter="url(#nz2)" opacity=".7"/></g><rect x="70" y="1" width="1" height="90" fill="#d0d0d0"/><rect x="1" y="90" width="70" height="1" fill="#d0d0d0"/></svg>
    <div class="fn" style="left:308px;top:255px;letter-spacing:.15px">Boab-Cap-B.jpg</div>
  </div>
  <!-- file name / type -->
  <div class="l" style="left:101px;top:377px">File name:</div>
  <div class="l" style="left:101px;top:403px">Files of type:</div>
  <div class="abs" style="left:195px;top:374px;width:245px;height:20px;background:#fff;border:1px solid #7a7a7a"></div>
  <div class="abs" style="left:195px;top:400px;width:245px;height:20px;background:#fff;border:1px solid #7a7a7a;border-right-color:#e3e3e3;border-bottom-color:#e3e3e3;box-shadow:inset 1px 1px 0 #696969"></div>
  <div class="l" style="left:199px;top:404px">All objects</div>
  <div class="abs" style="left:421px;top:402px;width:17px;height:17px;background:#e1e1e1;border:1px solid #adadad;box-shadow:inset -1px -1px 0 #808080,inset 1px 1px 0 #fff"></div>
  <svg style="left:426px;top:409px" width="7" height="4" viewBox="0 0 7 4"><path d="M0 0H7L3.500 4Z" fill="#000"/></svg>
  <div class="btn" style="left:474px;top:371px;width:74px;height:24px;border-color:#222;line-height:20px"><span>Open</span></div>
  <div class="btn" style="left:474px;top:397px;width:74px;height:23px;line-height:19px"><span>Cancel</span></div>
  <div class="btn" style="left:380px;top:427px;width:111px;height:23px;line-height:19px"><span>Import Options</span></div>
  <div class="abs" style="left:111px;top:452px;width:12px;height:12px;background:#fff;border:1px solid #333"></div>
  <div class="l" style="left:128px;top:452px">Collapse identical materials</div>
  <div class="grp" style="left:90px;top:481px;width:365px;height:31px"></div>
  <div class="l" style="left:96px;top:475px;background:#f0f0f0;padding:0 3px">Title</div>
  <div class="l" style="left:98px;top:494px">Australian Baobab 1</div>
  <div class="grp" style="left:90px;top:530px;width:365px;height:79px"></div>
  <div class="l" style="left:96px;top:524px;background:#f0f0f0;padding:0 3px">Description</div>
  <svg style="left:542px;top:607px" width="12" height="12" viewBox="0 0 12 12" fill="none" stroke="#9a9a9a" stroke-width="1"><path d="M11.500 0.500L0.500 11.500M11.500 4.500L4.500 11.500M11.500 8.500L8.500 11.500"/><path d="M11.500 1.500L1.500 11.500M11.500 5.500L5.500 11.500M11.500 9.500L9.500 11.500" stroke="#fff"/></svg>
</div>
<style>#dd{position:absolute;left:878px;top:45px;width:268px;height:561px;background:#fff;border:1px solid #000;overflow:hidden}#dd div{height:13px;line-height:13px;font-size:11px;color:#000;white-space:nowrap;padding-left:2px;-webkit-text-stroke:.25px currentColor}#dd div span{display:inline-block;position:relative;top:.5px;transform-origin:0 50%;transform:scaleX(.953)}#dd div.sel{background:#0078d7;color:#fff}</style>
<div id="dd">
<div><span>All objects</span></div>
<div class="sel"><span>VUE object (*.vob)</span></div>
<div><span>Poser object (*.pz3, *.pzz)</span></div>
<div><span>Geo-located elevation grids (*.dem,*.ddf,*.dted,*.dt*,*.tif)</span></div>
<div><span>Raw format object (*.raw)</span></div>
<div><span>OpenVDB Volume Data(*.vdb)</span></div>
<div><span>NanoVDB Volume Data(*.nvdb)</span></div>
<div><span>Terrain model (*.prt)</span></div>
<div><span>All files (*.*)</span></div>
<div><span>3D Meta File (*.3dmf)</span></div>
<div><span>3D Studio (*.3ds)</span></div>
<div><span>Truespace (*.cob)</span></div>
<div><span>Collada File (*.dae)</span></div>
<div><span>DXF format (*.dxf)</span></div>
<div><span>FilmBox (*.fbx)</span></div>
<div><span>Lightwave (*.lwo)</span></div>
<div><span>WaveFront (*.obj)</span></div>
<div><span>VRML (*.wrl)</span></div>
<div><span>Alembic (*.abc)</span></div>
<div><span>Pixologic Zbrush Object (*.GoZ)</span></div>
<div><span>Scalable Vector Graphics (*.svg)</span></div>
<div><span>PostScript files (*.ps)</span></div>
<div><span>Encapsulated PostScript files (*.eps)</span></div>
<div><span>Adobe Illustrator (*.ai, up to v3.2)</span></div>
<div><span>VUE images (*.vim)</span></div>
<div><span>BMP (*.bmp)</span></div>
<div><span>BUM Poser bump map file (*.bum)</span></div>
<div><span>USGS/SDTS DEM (*.dem; *.ddf)</span></div>
<div><span>ILM OpenEXR (*.exr)</span></div>
<div><span>GIF (*.gif)</span></div>
<div><span>High dynamic range (*.hdr)</span></div>
<div><span>IFF (*.iff)</span></div>
<div><span>Jpeg (*.jpg; *.jpeg)</span></div>
<div><span>PCX (*.pcx)</span></div>
<div><span>PNG (*.png)</span></div>
<div><span>Photoshop image file (*.psd)</span></div>
<div><span>Targa (*.tga)</span></div>
<div><span>Tiff (*.tif; *.tiff)</span></div>
<div><span>JPEG 2000 (*.jp2)</span></div>
<div><span>Digital Terrain Elevation Data (*.dted, *.dt*)</span></div>
<div><span>Terragen Terrain (*.ter)</span></div>
<div><span>HFA - Erdas Imagine (*.img)</span></div>
<div><span>ESRI EHdr (*.bil)</span></div>
</div>
</div>
</body>
</html>
